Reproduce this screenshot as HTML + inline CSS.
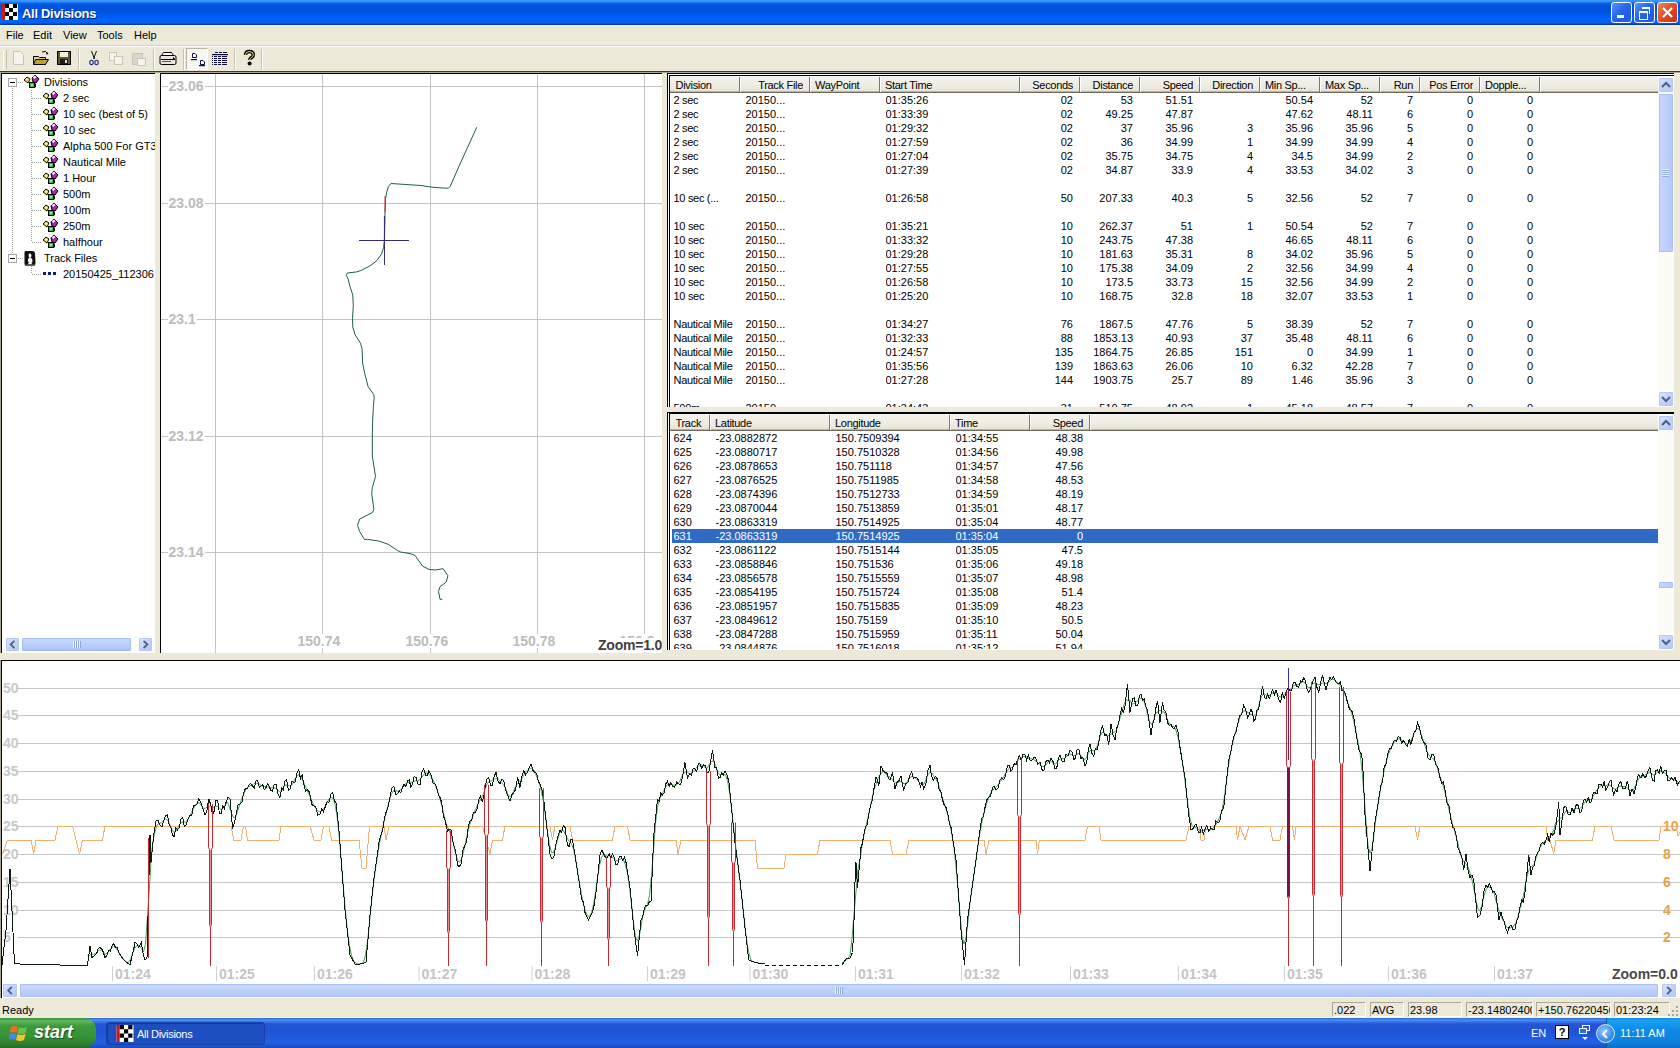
<!DOCTYPE html>
<html><head><meta charset="utf-8"><style>
html,body{margin:0;padding:0;width:1680px;height:1048px;overflow:hidden;background:#ece9d8;position:relative;}
.t11{position:absolute;font-family:"Liberation Sans",sans-serif;font-size:11px;line-height:13px;color:#000;white-space:nowrap;}
.tbtn{position:absolute;top:2px;width:21px;height:21px;border:1px solid #fff;border-radius:3px;box-sizing:border-box;background:linear-gradient(135deg,#5a94f8 0%,#2a6af0 40%,#1e5ce8 70%,#2a64e0 100%);}
</style></head><body>
<div id="title" style="position:absolute;left:0;top:0;width:1680px;height:25px;
 background:linear-gradient(to bottom,#3a9bff 0px,#3290f8 1.5px,#0a5ee2 3.5px,#0052e0 6px,#0052dc 12px,#005bf0 15px,#0064fc 20px,#0a5cf2 23px,#083c9c 24.5px,#06389a 25px);"></div>
<div style="position:absolute;left:2px;top:4px;width:16px;height:16px;">
 <svg width="16" height="16" viewBox="0 0 16 16"><rect x="0" y="0" width="16" height="16" fill="#fff"/>
 <rect x="0" y="0" width="3" height="16" fill="#d01818"/>
 <rect x="3" y="0" width="4" height="4" fill="#000"/><rect x="11" y="0" width="4" height="4" fill="#000"/>
 <rect x="7" y="4" width="4" height="4" fill="#000"/><rect x="3" y="8" width="4" height="4" fill="#000"/>
 <rect x="11" y="8" width="4" height="4" fill="#000"/><rect x="7" y="12" width="4" height="4" fill="#000"/></svg></div>
<div style="position:absolute;left:22px;top:5.5px;font:bold 13px 'Liberation Sans',sans-serif;color:#fff;letter-spacing:-0.3px;text-shadow:1px 1px 0 #0a246a;">All Divisions</div>
<div class="tbtn" style="left:1611px;"><div style="position:absolute;left:5px;top:12px;width:7px;height:3px;background:#fff;"></div></div>
<div class="tbtn" style="left:1634px;"><div style="position:absolute;left:4px;top:8px;width:7px;height:6px;border:1px solid #fff;border-top-width:2px;"></div><div style="position:absolute;left:7px;top:4px;width:7px;height:5px;border:1px solid #fff;border-top-width:2px;border-left:none;border-bottom:none;"></div></div>
<div class="tbtn" style="left:1657px;background:linear-gradient(135deg,#f08c6a 0%,#e35b32 35%,#d8401c 70%,#c33214 100%);">
 <svg width="21" height="21" viewBox="0 0 21 21" style="position:absolute;left:-1px;top:-1px"><path d="M6 6 L15 15 M15 6 L6 15" stroke="#fff" stroke-width="2"/></svg></div>
<div style="position:absolute;left:0;top:25px;width:1680px;height:46px;background:#ece9d8;"></div><div style="position:absolute;left:0;top:25px;width:1680px;height:2px;background:linear-gradient(to bottom,#e2f6ff,#ece9d8);"></div><div class="t11" style="left:6px;top:29px;">File</div><div class="t11" style="left:33px;top:29px;">Edit</div><div class="t11" style="left:63px;top:29px;">View</div><div class="t11" style="left:97px;top:29px;">Tools</div><div class="t11" style="left:134px;top:29px;">Help</div><div style="position:absolute;left:0;top:45px;width:1680px;height:1px;background:#d8d2bd;"></div><div style="position:absolute;left:0;top:46px;width:1680px;height:1px;background:#fff;"></div><div style="position:absolute;left:3px;top:50px;width:2px;height:19px;border-left:1px solid #fff;border-right:1px solid #c1bdaa;"></div><div style="position:absolute;left:78px;top:49px;width:1px;height:21px;background:#c5c2b2;"></div><div style="position:absolute;left:79px;top:49px;width:1px;height:21px;background:#fff;"></div><div style="position:absolute;left:153px;top:49px;width:1px;height:21px;background:#c5c2b2;"></div><div style="position:absolute;left:154px;top:49px;width:1px;height:21px;background:#fff;"></div><div style="position:absolute;left:183px;top:49px;width:1px;height:21px;background:#c5c2b2;"></div><div style="position:absolute;left:184px;top:49px;width:1px;height:21px;background:#fff;"></div><div style="position:absolute;left:234px;top:49px;width:1px;height:21px;background:#c5c2b2;"></div><div style="position:absolute;left:235px;top:49px;width:1px;height:21px;background:#fff;"></div><div style="position:absolute;left:261px;top:49px;width:1px;height:21px;background:#c5c2b2;"></div><div style="position:absolute;left:262px;top:49px;width:1px;height:21px;background:#fff;"></div><div style="position:absolute;left:186px;top:48px;width:22px;height:22px;background:#f7f6f1;border-left:1px solid #b9b5a4;border-top:1px solid #b9b5a4;border-right:1px solid #fff;border-bottom:1px solid #fff;box-sizing:border-box;"></div>
<svg style="position:absolute;left:0;top:47px" width="270" height="24" viewBox="0 47 270 24">
 <!-- new (disabled) -->
 <path d="M13.5 51.5 h7 l3 3 v10 h-10 z" fill="#f4f3ee" stroke="#c9c6b6"/>
 <!-- open -->
 <path d="M33.5 56.5 h5 l1 1 h6 v7 h-12 z" fill="#e8d36a" stroke="#000"/>
 <path d="M35.5 59.5 h13 l-3 5 h-12 z" fill="#b9a23c" stroke="#000"/>
 <path d="M42 52 q4 -2 6 2" fill="none" stroke="#000"/><path d="M47 52 l1.5 2 l-2.5 0.5z" fill="#000"/>
 <!-- save -->
 <rect x="57.5" y="51.5" width="13" height="13" fill="#5e5a2a" stroke="#000"/>
 <rect x="60" y="52" width="8" height="5" fill="#f2efe0"/>
 <rect x="60" y="59" width="8" height="5" fill="#1e1e1e"/><rect x="65" y="60" width="2" height="3" fill="#ddd"/>
 <!-- cut -->
 <path d="M91.5 51 l3 8 M96.5 51 l-3 8" stroke="#111" stroke-width="1"/>
 <ellipse cx="91.5" cy="62.5" rx="1.7" ry="2.2" fill="none" stroke="#22228a" stroke-width="1.1"/><ellipse cx="96.5" cy="62.5" rx="1.7" ry="2.2" fill="none" stroke="#22228a" stroke-width="1.1"/>
 <!-- copy disabled -->
 <rect x="109.5" y="52.5" width="7" height="8" fill="#f4f3ee" stroke="#c9c6b6"/><rect x="114.5" y="56.5" width="8" height="8" fill="#f4f3ee" stroke="#c9c6b6"/>
 <!-- paste disabled -->
 <rect x="132.5" y="53.5" width="10" height="11" fill="#d8d6cc" stroke="#c9c6b6"/><rect x="137.5" y="58.5" width="8" height="7" fill="#f4f3ee" stroke="#c9c6b6"/>
 <!-- print -->
 <path d="M163.5 52.5 h8 l2 3 h-12 z" fill="#fff" stroke="#000"/>
 <path d="M161.5 55.5 h13 q1.5 0 1.5 1.5 v6 q0 1.5 -1.5 1.5 h-13 q-1.5 0 -1.5 -1.5 v-6 q0 -1.5 1.5 -1.5z" fill="#e8e6de" stroke="#000"/>
 <rect x="161" y="59" width="14" height="1" fill="#000"/><rect x="162" y="61" width="9" height="1" fill="#555"/>
 <path d="M173 57 l2 1.5 l-2 1.5z" fill="#000"/>
 <!-- tile -->
 <path d="M192.5 53.5 h2.5 l1.5 1.5 v2.5 h-4z" fill="#fff" stroke="#101058"/><rect x="191" y="59" width="6" height="1.2" fill="#101058"/>
 <path d="M200.5 60.5 h2.5 l1.5 1.5 v2.5 h-4z" fill="#fff" stroke="#101058"/><rect x="199" y="65" width="6" height="1.2" fill="#101058"/>
 <!-- grid -->
 <g fill="#101040">
 <rect x="215" y="52" width="3" height="1"/><rect x="219" y="52" width="3" height="1"/><rect x="223" y="52" width="4" height="1"/>
 <rect x="212" y="54" width="16" height="1.2"/>
 <rect x="212" y="56" width="1" height="1"/><rect x="214" y="56" width="3" height="1"/><rect x="218" y="56" width="3" height="1"/><rect x="222" y="56" width="5" height="1"/>
 <rect x="212" y="58" width="1" height="1"/><rect x="214" y="58" width="3" height="1"/><rect x="218" y="58" width="3" height="1"/><rect x="222" y="58" width="5" height="1"/>
 <rect x="212" y="60" width="1" height="1"/><rect x="214" y="60" width="3" height="1"/><rect x="218" y="60" width="3" height="1"/><rect x="222" y="60" width="5" height="1"/>
 <rect x="212" y="62" width="1" height="1"/><rect x="214" y="62" width="3" height="1"/><rect x="218" y="62" width="3" height="1"/><rect x="222" y="62" width="5" height="1"/>
 <rect x="212" y="64" width="1" height="1"/><rect x="214" y="64" width="3" height="1"/><rect x="218" y="64" width="3" height="1"/><rect x="222" y="64" width="5" height="1"/>
 </g>
 <!-- help -->
 <path d="M245.5 55 q0 -3.5 3.8 -3.5 q4 0 4 3.3 q0 2 -2.2 3 q-1.3 0.7 -1.3 2.2" fill="none" stroke="#000" stroke-width="3.4"/>
 <path d="M245.5 55 q0 -3.5 3.8 -3.5 q4 0 4 3.3 q0 2 -2.2 3 q-1.3 0.7 -1.3 2.2" fill="none" stroke="#f4e68a" stroke-width="1"/>
 <circle cx="249.6" cy="63.4" r="2" fill="#000"/>
</svg><div style="position:absolute;left:0;top:71px;width:1680px;height:1px;background:#3a3a3a;"></div><div style="position:absolute;left:0;top:72px;width:1680px;height:1px;background:#aca899;"></div><div style="position:absolute;left:0;top:73px;width:155px;height:580px;background:#fff;border-top:1px solid #000;border-left:2px solid #000;box-sizing:border-box;"></div><div style="position:absolute;left:0;top:73px;width:1px;height:580px;background:#aca899;"></div><div style="position:absolute;left:12px;top:88px;width:1px;height:170px;background-image:repeating-linear-gradient(to bottom,#a0a0a0 0 1px,transparent 1px 2px);"></div><div style="position:absolute;left:18px;top:82px;width:5px;height:1px;background-image:repeating-linear-gradient(to right,#a0a0a0 0 1px,transparent 1px 2px);"></div><div style="position:absolute;left:18px;top:258px;width:5px;height:1px;background-image:repeating-linear-gradient(to right,#a0a0a0 0 1px,transparent 1px 2px);"></div><div style="position:absolute;left:31px;top:90px;width:1px;height:152px;background-image:repeating-linear-gradient(to bottom,#a0a0a0 0 1px,transparent 1px 2px);"></div><div style="position:absolute;left:31px;top:264px;width:1px;height:10px;background-image:repeating-linear-gradient(to bottom,#a0a0a0 0 1px,transparent 1px 2px);"></div><div style="position:absolute;left:8px;top:78px;width:9px;height:9px;border:1px solid #a5a5a5;box-sizing:border-box;background:#fff;"><div style="position:absolute;left:1px;top:3px;width:5px;height:1px;background:#000;"></div></div><div style="position:absolute;left:8px;top:254px;width:9px;height:9px;border:1px solid #a5a5a5;box-sizing:border-box;background:#fff;"><div style="position:absolute;left:1px;top:3px;width:5px;height:1px;background:#000;"></div></div><svg style="position:absolute;left:23px;top:75px" width="17" height="14" viewBox="0 0 17 14">
<path d="M1 5 L4 2 L7 4 L5 8 Z" fill="#f2e27a" stroke="#000" stroke-width="1"/>
<path d="M9 3 L12 0 L16 4 L13 8 L10 7 Z" fill="#a02aa8" stroke="#000" stroke-width="1"/>
<path d="M10 2 L12 0.5 L13.5 2 L11 4z" fill="#fff"/>
<rect x="6.5" y="7.5" width="5" height="5" fill="#3cb44a" stroke="#000"/>
<rect x="8" y="9" width="2" height="2" fill="#9be49b"/>
<path d="M11 8 l2 1 v3 l-2 1z" fill="#000"/>
</svg><div class="t11" style="left:44px;top:76px;">Divisions</div><div style="position:absolute;left:32px;top:98px;width:10px;height:1px;background-image:repeating-linear-gradient(to right,#a0a0a0 0 1px,transparent 1px 2px);"></div><svg style="position:absolute;left:42px;top:91px" width="17" height="14" viewBox="0 0 17 14">
<path d="M1 5 L4 2 L7 4 L5 8 Z" fill="#f2e27a" stroke="#000" stroke-width="1"/>
<path d="M9 3 L12 0 L16 4 L13 8 L10 7 Z" fill="#a02aa8" stroke="#000" stroke-width="1"/>
<path d="M10 2 L12 0.5 L13.5 2 L11 4z" fill="#fff"/>
<rect x="6.5" y="7.5" width="5" height="5" fill="#3cb44a" stroke="#000"/>
<rect x="8" y="9" width="2" height="2" fill="#9be49b"/>
<path d="M11 8 l2 1 v3 l-2 1z" fill="#000"/>
</svg><div class="t11" style="left:63px;top:92px;width:92px;overflow:hidden;">2 sec</div><div style="position:absolute;left:32px;top:114px;width:10px;height:1px;background-image:repeating-linear-gradient(to right,#a0a0a0 0 1px,transparent 1px 2px);"></div><svg style="position:absolute;left:42px;top:107px" width="17" height="14" viewBox="0 0 17 14">
<path d="M1 5 L4 2 L7 4 L5 8 Z" fill="#f2e27a" stroke="#000" stroke-width="1"/>
<path d="M9 3 L12 0 L16 4 L13 8 L10 7 Z" fill="#a02aa8" stroke="#000" stroke-width="1"/>
<path d="M10 2 L12 0.5 L13.5 2 L11 4z" fill="#fff"/>
<rect x="6.5" y="7.5" width="5" height="5" fill="#3cb44a" stroke="#000"/>
<rect x="8" y="9" width="2" height="2" fill="#9be49b"/>
<path d="M11 8 l2 1 v3 l-2 1z" fill="#000"/>
</svg><div class="t11" style="left:63px;top:108px;width:92px;overflow:hidden;">10 sec (best of 5)</div><div style="position:absolute;left:32px;top:130px;width:10px;height:1px;background-image:repeating-linear-gradient(to right,#a0a0a0 0 1px,transparent 1px 2px);"></div><svg style="position:absolute;left:42px;top:123px" width="17" height="14" viewBox="0 0 17 14">
<path d="M1 5 L4 2 L7 4 L5 8 Z" fill="#f2e27a" stroke="#000" stroke-width="1"/>
<path d="M9 3 L12 0 L16 4 L13 8 L10 7 Z" fill="#a02aa8" stroke="#000" stroke-width="1"/>
<path d="M10 2 L12 0.5 L13.5 2 L11 4z" fill="#fff"/>
<rect x="6.5" y="7.5" width="5" height="5" fill="#3cb44a" stroke="#000"/>
<rect x="8" y="9" width="2" height="2" fill="#9be49b"/>
<path d="M11 8 l2 1 v3 l-2 1z" fill="#000"/>
</svg><div class="t11" style="left:63px;top:124px;width:92px;overflow:hidden;">10 sec</div><div style="position:absolute;left:32px;top:146px;width:10px;height:1px;background-image:repeating-linear-gradient(to right,#a0a0a0 0 1px,transparent 1px 2px);"></div><svg style="position:absolute;left:42px;top:139px" width="17" height="14" viewBox="0 0 17 14">
<path d="M1 5 L4 2 L7 4 L5 8 Z" fill="#f2e27a" stroke="#000" stroke-width="1"/>
<path d="M9 3 L12 0 L16 4 L13 8 L10 7 Z" fill="#a02aa8" stroke="#000" stroke-width="1"/>
<path d="M10 2 L12 0.5 L13.5 2 L11 4z" fill="#fff"/>
<rect x="6.5" y="7.5" width="5" height="5" fill="#3cb44a" stroke="#000"/>
<rect x="8" y="9" width="2" height="2" fill="#9be49b"/>
<path d="M11 8 l2 1 v3 l-2 1z" fill="#000"/>
</svg><div class="t11" style="left:63px;top:140px;width:92px;overflow:hidden;">Alpha 500 For GT3:</div><div style="position:absolute;left:32px;top:162px;width:10px;height:1px;background-image:repeating-linear-gradient(to right,#a0a0a0 0 1px,transparent 1px 2px);"></div><svg style="position:absolute;left:42px;top:155px" width="17" height="14" viewBox="0 0 17 14">
<path d="M1 5 L4 2 L7 4 L5 8 Z" fill="#f2e27a" stroke="#000" stroke-width="1"/>
<path d="M9 3 L12 0 L16 4 L13 8 L10 7 Z" fill="#a02aa8" stroke="#000" stroke-width="1"/>
<path d="M10 2 L12 0.5 L13.5 2 L11 4z" fill="#fff"/>
<rect x="6.5" y="7.5" width="5" height="5" fill="#3cb44a" stroke="#000"/>
<rect x="8" y="9" width="2" height="2" fill="#9be49b"/>
<path d="M11 8 l2 1 v3 l-2 1z" fill="#000"/>
</svg><div class="t11" style="left:63px;top:156px;width:92px;overflow:hidden;">Nautical Mile</div><div style="position:absolute;left:32px;top:178px;width:10px;height:1px;background-image:repeating-linear-gradient(to right,#a0a0a0 0 1px,transparent 1px 2px);"></div><svg style="position:absolute;left:42px;top:171px" width="17" height="14" viewBox="0 0 17 14">
<path d="M1 5 L4 2 L7 4 L5 8 Z" fill="#f2e27a" stroke="#000" stroke-width="1"/>
<path d="M9 3 L12 0 L16 4 L13 8 L10 7 Z" fill="#a02aa8" stroke="#000" stroke-width="1"/>
<path d="M10 2 L12 0.5 L13.5 2 L11 4z" fill="#fff"/>
<rect x="6.5" y="7.5" width="5" height="5" fill="#3cb44a" stroke="#000"/>
<rect x="8" y="9" width="2" height="2" fill="#9be49b"/>
<path d="M11 8 l2 1 v3 l-2 1z" fill="#000"/>
</svg><div class="t11" style="left:63px;top:172px;width:92px;overflow:hidden;">1 Hour</div><div style="position:absolute;left:32px;top:194px;width:10px;height:1px;background-image:repeating-linear-gradient(to right,#a0a0a0 0 1px,transparent 1px 2px);"></div><svg style="position:absolute;left:42px;top:187px" width="17" height="14" viewBox="0 0 17 14">
<path d="M1 5 L4 2 L7 4 L5 8 Z" fill="#f2e27a" stroke="#000" stroke-width="1"/>
<path d="M9 3 L12 0 L16 4 L13 8 L10 7 Z" fill="#a02aa8" stroke="#000" stroke-width="1"/>
<path d="M10 2 L12 0.5 L13.5 2 L11 4z" fill="#fff"/>
<rect x="6.5" y="7.5" width="5" height="5" fill="#3cb44a" stroke="#000"/>
<rect x="8" y="9" width="2" height="2" fill="#9be49b"/>
<path d="M11 8 l2 1 v3 l-2 1z" fill="#000"/>
</svg><div class="t11" style="left:63px;top:188px;width:92px;overflow:hidden;">500m</div><div style="position:absolute;left:32px;top:210px;width:10px;height:1px;background-image:repeating-linear-gradient(to right,#a0a0a0 0 1px,transparent 1px 2px);"></div><svg style="position:absolute;left:42px;top:203px" width="17" height="14" viewBox="0 0 17 14">
<path d="M1 5 L4 2 L7 4 L5 8 Z" fill="#f2e27a" stroke="#000" stroke-width="1"/>
<path d="M9 3 L12 0 L16 4 L13 8 L10 7 Z" fill="#a02aa8" stroke="#000" stroke-width="1"/>
<path d="M10 2 L12 0.5 L13.5 2 L11 4z" fill="#fff"/>
<rect x="6.5" y="7.5" width="5" height="5" fill="#3cb44a" stroke="#000"/>
<rect x="8" y="9" width="2" height="2" fill="#9be49b"/>
<path d="M11 8 l2 1 v3 l-2 1z" fill="#000"/>
</svg><div class="t11" style="left:63px;top:204px;width:92px;overflow:hidden;">100m</div><div style="position:absolute;left:32px;top:226px;width:10px;height:1px;background-image:repeating-linear-gradient(to right,#a0a0a0 0 1px,transparent 1px 2px);"></div><svg style="position:absolute;left:42px;top:219px" width="17" height="14" viewBox="0 0 17 14">
<path d="M1 5 L4 2 L7 4 L5 8 Z" fill="#f2e27a" stroke="#000" stroke-width="1"/>
<path d="M9 3 L12 0 L16 4 L13 8 L10 7 Z" fill="#a02aa8" stroke="#000" stroke-width="1"/>
<path d="M10 2 L12 0.5 L13.5 2 L11 4z" fill="#fff"/>
<rect x="6.5" y="7.5" width="5" height="5" fill="#3cb44a" stroke="#000"/>
<rect x="8" y="9" width="2" height="2" fill="#9be49b"/>
<path d="M11 8 l2 1 v3 l-2 1z" fill="#000"/>
</svg><div class="t11" style="left:63px;top:220px;width:92px;overflow:hidden;">250m</div><div style="position:absolute;left:32px;top:242px;width:10px;height:1px;background-image:repeating-linear-gradient(to right,#a0a0a0 0 1px,transparent 1px 2px);"></div><svg style="position:absolute;left:42px;top:235px" width="17" height="14" viewBox="0 0 17 14">
<path d="M1 5 L4 2 L7 4 L5 8 Z" fill="#f2e27a" stroke="#000" stroke-width="1"/>
<path d="M9 3 L12 0 L16 4 L13 8 L10 7 Z" fill="#a02aa8" stroke="#000" stroke-width="1"/>
<path d="M10 2 L12 0.5 L13.5 2 L11 4z" fill="#fff"/>
<rect x="6.5" y="7.5" width="5" height="5" fill="#3cb44a" stroke="#000"/>
<rect x="8" y="9" width="2" height="2" fill="#9be49b"/>
<path d="M11 8 l2 1 v3 l-2 1z" fill="#000"/>
</svg><div class="t11" style="left:63px;top:236px;width:92px;overflow:hidden;">halfhour</div><svg style="position:absolute;left:24px;top:251px" width="12" height="15" viewBox="0 0 12 15">
<path d="M0.5 1 q0 -1 2 -1 h6 q2 0 2.5 2 l0.5 10 q0 2 -1.5 2.5 h-8 q-1.5 0 -1.5 -1.5z" fill="#111"/>
<path d="M5 2.5 q2.5 -0.5 2.5 2 q0 1.5 -1 2 q2 1 2 3 q0 2 -1 2.5 l1 1.5 h-5 l1.5 -2 q-1.5 -1 -1 -3 q0.5 -1.5 1.5 -2 q-1.5 -1 -0.5 -4z" fill="#f4f4f4"/>
<path d="M1 13 h10 v2 h-10z" fill="#2a5a2a" opacity="0.6"/></svg><div class="t11" style="left:44px;top:252px;">Track Files</div><div style="position:absolute;left:32px;top:274px;width:10px;height:1px;background-image:repeating-linear-gradient(to right,#a0a0a0 0 1px,transparent 1px 2px);"></div><div style="position:absolute;left:43px;top:272px;width:13px;height:3px;background-image:repeating-linear-gradient(to right,#101880 0 3px,transparent 3px 5px);"></div><div class="t11" style="left:63px;top:268px;">20150425_112306</div><div style="position:absolute;left:3px;top:636px;width:151px;height:16px;background:#fbfbf8;"></div><div style="position:absolute;left:5px;top:637px;width:15px;height:15px;border-radius:2px;background:linear-gradient(135deg,#dce6fc,#c2d3fc 50%,#b0c6f8);border:1px solid #fff;box-sizing:border-box;box-shadow:inset 0 0 0 1px #b6c8f0;">
<svg width="13" height="13" style="position:absolute;left:0;top:0" viewBox="0 0 14 14"><path d="M9 3 L5 7 L9 11" fill="none" stroke="#4d6185" stroke-width="2"/></svg></div><div style="position:absolute;left:138px;top:637px;width:15px;height:15px;border-radius:2px;background:linear-gradient(135deg,#dce6fc,#c2d3fc 50%,#b0c6f8);border:1px solid #fff;box-sizing:border-box;box-shadow:inset 0 0 0 1px #b6c8f0;">
<svg width="13" height="13" style="position:absolute;left:0;top:0" viewBox="0 0 14 14"><path d="M5 3 L9 7 L5 11" fill="none" stroke="#4d6185" stroke-width="2"/></svg></div><div style="position:absolute;left:21px;top:637px;width:111px;height:15px;border-radius:2px;background:linear-gradient(to bottom,#c8d8fc,#b8cdfb 60%,#a8c0f8);border:1px solid #fff;box-sizing:border-box;box-shadow:inset 0 0 0 1px #a9bef2;"></div><div style="position:absolute;left:73px;top:641px;width:8px;height:7px;background-image:repeating-linear-gradient(to right,#eef3ff 0 1px,#8ea8e0 1px 2px);"></div><div style="position:absolute;left:160px;top:73px;width:502px;height:580px;background:#fff;border-left:1px solid #000;border-top:1px solid #000;box-sizing:border-box;overflow:hidden;"><svg width="502" height="580" style="position:absolute;left:-1px;top:-1px" viewBox="160 73 502 580"><line x1="215.5" y1="73" x2="215.5" y2="653" stroke="#c4c4c4" stroke-width="1"/><line x1="322.5" y1="73" x2="322.5" y2="653" stroke="#c4c4c4" stroke-width="1"/><line x1="430.5" y1="73" x2="430.5" y2="653" stroke="#c4c4c4" stroke-width="1"/><line x1="537.5" y1="73" x2="537.5" y2="653" stroke="#c4c4c4" stroke-width="1"/><line x1="644.5" y1="73" x2="644.5" y2="653" stroke="#c4c4c4" stroke-width="1"/><line x1="160" y1="86.5" x2="662" y2="86.5" stroke="#c4c4c4" stroke-width="1"/><line x1="160" y1="203.5" x2="662" y2="203.5" stroke="#c4c4c4" stroke-width="1"/><line x1="160" y1="319.5" x2="662" y2="319.5" stroke="#c4c4c4" stroke-width="1"/><line x1="160" y1="436.5" x2="662" y2="436.5" stroke="#c4c4c4" stroke-width="1"/><line x1="160" y1="552.5" x2="662" y2="552.5" stroke="#c4c4c4" stroke-width="1"/><polyline points="476.8,127.2 467.4,147.8 458.8,166.7 450.2,186.4 448.5,188.1 443.3,188.1 433,187.3 421,185.5 409,184.7 395.2,183.8 391,183.5 388.4,186.4 386.7,192.4 385.5,199.3 385,213 384.6,230.2 384.3,240.5 383.6,247.4 381.5,254.2 376.4,261.1 369.5,266.2 360.9,270.5 356.6,271.9 347.5,273 346.3,275.3 348.2,279.1 349.8,286 352.8,295.1 353.3,305.8 352.5,318.8 352.8,327.2 355.1,334.8 360.5,343.2 362,348.5 362.7,363.8 365,374.5 368.1,386.7 373.7,394.4 374.2,397.4 373.4,406.6 372.7,420 372.3,434 372.3,456 375.5,476.5 372.3,487.5 371.7,493.8 373.9,509.5 372.3,512.7 366,515.8 359.7,519 357.5,525.3 359.7,531.6 364.4,539.4 367.6,539.4 378.6,541 388.1,544.2 397.5,550.5 400.7,552 410.1,553.6 414.8,555.2 422.7,566.2 429,569.4 435.3,570 443.2,568.7 447.9,575.7 446.3,582 440,586.7 438.5,591.4 440,599.3 442.2,599.3" fill="none" stroke="#1d5e48" stroke-width="1"/><line x1="385" y1="196" x2="385" y2="212" stroke="#c03030" stroke-width="1"/><line x1="384.5" y1="216" x2="384.5" y2="238" stroke="#802080" stroke-width="1.2"/><line x1="359" y1="240.5" x2="409" y2="240.5" stroke="#3a2a7a" stroke-width="1"/><line x1="384.5" y1="216" x2="384.5" y2="265" stroke="#3a2a7a" stroke-width="1"/></svg><div style="position:absolute;font:bold 14px 'Liberation Sans',sans-serif;color:#bcbcbc;background:#fff;line-height:14px;left:6.5px;top:5px;padding:0 1px;">23.06</div><div style="position:absolute;font:bold 14px 'Liberation Sans',sans-serif;color:#bcbcbc;background:#fff;line-height:14px;left:6.5px;top:122px;padding:0 1px;">23.08</div><div style="position:absolute;font:bold 14px 'Liberation Sans',sans-serif;color:#bcbcbc;background:#fff;line-height:14px;left:6.5px;top:238px;padding:0 1px;">23.1</div><div style="position:absolute;font:bold 14px 'Liberation Sans',sans-serif;color:#bcbcbc;background:#fff;line-height:14px;left:6.5px;top:355px;padding:0 1px;">23.12</div><div style="position:absolute;font:bold 14px 'Liberation Sans',sans-serif;color:#bcbcbc;background:#fff;line-height:14px;left:6.5px;top:471px;padding:0 1px;">23.14</div><div style="position:absolute;font:bold 14px 'Liberation Sans',sans-serif;color:#bcbcbc;background:#fff;line-height:14px;left:135.5px;top:559.5px;padding:0 1px;">150.74</div><div style="position:absolute;font:bold 14px 'Liberation Sans',sans-serif;color:#bcbcbc;background:#fff;line-height:14px;left:243.5px;top:559.5px;padding:0 1px;">150.76</div><div style="position:absolute;font:bold 14px 'Liberation Sans',sans-serif;color:#bcbcbc;background:#fff;line-height:14px;left:350.5px;top:559.5px;padding:0 1px;">150.78</div><div style="position:absolute;font:bold 14px 'Liberation Sans',sans-serif;color:#bcbcbc;background:#fff;line-height:14px;left:457.5px;top:559.5px;padding:0 1px;">150.8</div><div style="position:absolute;font:bold 14px 'Liberation Sans',sans-serif;color:#bcbcbc;background:#fff;line-height:14px;color:#404040;left:436px;top:564px;padding:0 0 0 1px;letter-spacing:-0.2px;">Zoom=1.0</div></div><div style="position:absolute;left:667px;top:73px;width:1007px;height:334px;background:#fff;border-left:1px solid #000;border-top:1px solid #000;box-sizing:border-box;"></div><div style="position:absolute;left:669px;top:75px;width:1px;height:332px;background:#000;"></div><div style="position:absolute;left:669px;top:75px;width:1005px;height:1px;background:#000;"></div><div style="position:absolute;left:670px;top:76px;width:988px;height:17px;background:linear-gradient(to bottom,#f4f3ec 0,#eeece2 60%,#e4e1d2 100%);box-sizing:border-box;"></div><div style="position:absolute;left:670px;top:91px;width:988px;height:1px;background:#b8b5a6;"></div><div style="position:absolute;left:670px;top:92px;width:988px;height:1px;background:#6e6b5e;"></div><div style="position:absolute;left:739px;top:77px;width:1px;height:15px;background:#7c7a6c;"></div><div style="position:absolute;left:740px;top:77px;width:1px;height:15px;background:#fff;"></div><div class="t11" style="left:675.5px;top:79px;width:65px;overflow:hidden;letter-spacing:-0.3px;">Division</div><div style="position:absolute;left:809px;top:77px;width:1px;height:15px;background:#7c7a6c;"></div><div style="position:absolute;left:810px;top:77px;width:1px;height:15px;background:#fff;"></div><div class="t11" style="left:739px;top:79px;width:64px;text-align:right;overflow:hidden;letter-spacing:-0.3px;">Track File</div><div style="position:absolute;left:879px;top:77px;width:1px;height:15px;background:#7c7a6c;"></div><div style="position:absolute;left:880px;top:77px;width:1px;height:15px;background:#fff;"></div><div class="t11" style="left:815px;top:79px;width:64px;overflow:hidden;letter-spacing:-0.3px;">WayPoint</div><div style="position:absolute;left:1019px;top:77px;width:1px;height:15px;background:#7c7a6c;"></div><div style="position:absolute;left:1020px;top:77px;width:1px;height:15px;background:#fff;"></div><div class="t11" style="left:885px;top:79px;width:134px;overflow:hidden;letter-spacing:-0.3px;">Start Time</div><div style="position:absolute;left:1079px;top:77px;width:1px;height:15px;background:#7c7a6c;"></div><div style="position:absolute;left:1080px;top:77px;width:1px;height:15px;background:#fff;"></div><div class="t11" style="left:1019px;top:79px;width:54px;text-align:right;overflow:hidden;letter-spacing:-0.3px;">Seconds</div><div style="position:absolute;left:1139px;top:77px;width:1px;height:15px;background:#7c7a6c;"></div><div style="position:absolute;left:1140px;top:77px;width:1px;height:15px;background:#fff;"></div><div class="t11" style="left:1079px;top:79px;width:54px;text-align:right;overflow:hidden;letter-spacing:-0.3px;">Distance</div><div style="position:absolute;left:1199px;top:77px;width:1px;height:15px;background:#7c7a6c;"></div><div style="position:absolute;left:1200px;top:77px;width:1px;height:15px;background:#fff;"></div><div class="t11" style="left:1139px;top:79px;width:54px;text-align:right;overflow:hidden;letter-spacing:-0.3px;">Speed</div><div style="position:absolute;left:1259px;top:77px;width:1px;height:15px;background:#7c7a6c;"></div><div style="position:absolute;left:1260px;top:77px;width:1px;height:15px;background:#fff;"></div><div class="t11" style="left:1199px;top:79px;width:54px;text-align:right;overflow:hidden;letter-spacing:-0.3px;">Direction</div><div style="position:absolute;left:1319px;top:77px;width:1px;height:15px;background:#7c7a6c;"></div><div style="position:absolute;left:1320px;top:77px;width:1px;height:15px;background:#fff;"></div><div class="t11" style="left:1265px;top:79px;width:54px;overflow:hidden;letter-spacing:-0.3px;">Min Sp...</div><div style="position:absolute;left:1379px;top:77px;width:1px;height:15px;background:#7c7a6c;"></div><div style="position:absolute;left:1380px;top:77px;width:1px;height:15px;background:#fff;"></div><div class="t11" style="left:1325px;top:79px;width:54px;overflow:hidden;letter-spacing:-0.3px;">Max Sp...</div><div style="position:absolute;left:1419px;top:77px;width:1px;height:15px;background:#7c7a6c;"></div><div style="position:absolute;left:1420px;top:77px;width:1px;height:15px;background:#fff;"></div><div class="t11" style="left:1379px;top:79px;width:34px;text-align:right;overflow:hidden;letter-spacing:-0.3px;">Run</div><div style="position:absolute;left:1479px;top:77px;width:1px;height:15px;background:#7c7a6c;"></div><div style="position:absolute;left:1480px;top:77px;width:1px;height:15px;background:#fff;"></div><div class="t11" style="left:1419px;top:79px;width:54px;text-align:right;overflow:hidden;letter-spacing:-0.3px;">Pos Error</div><div style="position:absolute;left:1539px;top:77px;width:1px;height:15px;background:#7c7a6c;"></div><div style="position:absolute;left:1540px;top:77px;width:1px;height:15px;background:#fff;"></div><div class="t11" style="left:1485px;top:79px;width:54px;overflow:hidden;letter-spacing:-0.3px;">Dopple...</div><div style="position:absolute;left:670px;top:93px;width:988px;height:314px;overflow:hidden;"><div class="t11" style="left:3.5px;top:1px;width:65px;overflow:hidden;letter-spacing:-0.3px;">2 sec</div><div class="t11" style="left:75.5px;top:1px;width:64px;overflow:hidden;">20150...</div><div class="t11" style="left:215.5px;top:1px;width:134px;overflow:hidden;">01:35:26</div><div class="t11" style="left:349px;top:1px;width:54px;text-align:right;">02</div><div class="t11" style="left:409px;top:1px;width:54px;text-align:right;">53</div><div class="t11" style="left:469px;top:1px;width:54px;text-align:right;">51.51</div><div class="t11" style="left:589px;top:1px;width:54px;text-align:right;">50.54</div><div class="t11" style="left:649px;top:1px;width:54px;text-align:right;">52</div><div class="t11" style="left:709px;top:1px;width:34px;text-align:right;">7</div><div class="t11" style="left:749px;top:1px;width:54px;text-align:right;">0</div><div class="t11" style="left:809px;top:1px;width:54px;text-align:right;">0</div><div class="t11" style="left:3.5px;top:15px;width:65px;overflow:hidden;letter-spacing:-0.3px;">2 sec</div><div class="t11" style="left:75.5px;top:15px;width:64px;overflow:hidden;">20150...</div><div class="t11" style="left:215.5px;top:15px;width:134px;overflow:hidden;">01:33:39</div><div class="t11" style="left:349px;top:15px;width:54px;text-align:right;">02</div><div class="t11" style="left:409px;top:15px;width:54px;text-align:right;">49.25</div><div class="t11" style="left:469px;top:15px;width:54px;text-align:right;">47.87</div><div class="t11" style="left:589px;top:15px;width:54px;text-align:right;">47.62</div><div class="t11" style="left:649px;top:15px;width:54px;text-align:right;">48.11</div><div class="t11" style="left:709px;top:15px;width:34px;text-align:right;">6</div><div class="t11" style="left:749px;top:15px;width:54px;text-align:right;">0</div><div class="t11" style="left:809px;top:15px;width:54px;text-align:right;">0</div><div class="t11" style="left:3.5px;top:29px;width:65px;overflow:hidden;letter-spacing:-0.3px;">2 sec</div><div class="t11" style="left:75.5px;top:29px;width:64px;overflow:hidden;">20150...</div><div class="t11" style="left:215.5px;top:29px;width:134px;overflow:hidden;">01:29:32</div><div class="t11" style="left:349px;top:29px;width:54px;text-align:right;">02</div><div class="t11" style="left:409px;top:29px;width:54px;text-align:right;">37</div><div class="t11" style="left:469px;top:29px;width:54px;text-align:right;">35.96</div><div class="t11" style="left:529px;top:29px;width:54px;text-align:right;">3</div><div class="t11" style="left:589px;top:29px;width:54px;text-align:right;">35.96</div><div class="t11" style="left:649px;top:29px;width:54px;text-align:right;">35.96</div><div class="t11" style="left:709px;top:29px;width:34px;text-align:right;">5</div><div class="t11" style="left:749px;top:29px;width:54px;text-align:right;">0</div><div class="t11" style="left:809px;top:29px;width:54px;text-align:right;">0</div><div class="t11" style="left:3.5px;top:43px;width:65px;overflow:hidden;letter-spacing:-0.3px;">2 sec</div><div class="t11" style="left:75.5px;top:43px;width:64px;overflow:hidden;">20150...</div><div class="t11" style="left:215.5px;top:43px;width:134px;overflow:hidden;">01:27:59</div><div class="t11" style="left:349px;top:43px;width:54px;text-align:right;">02</div><div class="t11" style="left:409px;top:43px;width:54px;text-align:right;">36</div><div class="t11" style="left:469px;top:43px;width:54px;text-align:right;">34.99</div><div class="t11" style="left:529px;top:43px;width:54px;text-align:right;">1</div><div class="t11" style="left:589px;top:43px;width:54px;text-align:right;">34.99</div><div class="t11" style="left:649px;top:43px;width:54px;text-align:right;">34.99</div><div class="t11" style="left:709px;top:43px;width:34px;text-align:right;">4</div><div class="t11" style="left:749px;top:43px;width:54px;text-align:right;">0</div><div class="t11" style="left:809px;top:43px;width:54px;text-align:right;">0</div><div class="t11" style="left:3.5px;top:57px;width:65px;overflow:hidden;letter-spacing:-0.3px;">2 sec</div><div class="t11" style="left:75.5px;top:57px;width:64px;overflow:hidden;">20150...</div><div class="t11" style="left:215.5px;top:57px;width:134px;overflow:hidden;">01:27:04</div><div class="t11" style="left:349px;top:57px;width:54px;text-align:right;">02</div><div class="t11" style="left:409px;top:57px;width:54px;text-align:right;">35.75</div><div class="t11" style="left:469px;top:57px;width:54px;text-align:right;">34.75</div><div class="t11" style="left:529px;top:57px;width:54px;text-align:right;">4</div><div class="t11" style="left:589px;top:57px;width:54px;text-align:right;">34.5</div><div class="t11" style="left:649px;top:57px;width:54px;text-align:right;">34.99</div><div class="t11" style="left:709px;top:57px;width:34px;text-align:right;">2</div><div class="t11" style="left:749px;top:57px;width:54px;text-align:right;">0</div><div class="t11" style="left:809px;top:57px;width:54px;text-align:right;">0</div><div class="t11" style="left:3.5px;top:71px;width:65px;overflow:hidden;letter-spacing:-0.3px;">2 sec</div><div class="t11" style="left:75.5px;top:71px;width:64px;overflow:hidden;">20150...</div><div class="t11" style="left:215.5px;top:71px;width:134px;overflow:hidden;">01:27:39</div><div class="t11" style="left:349px;top:71px;width:54px;text-align:right;">02</div><div class="t11" style="left:409px;top:71px;width:54px;text-align:right;">34.87</div><div class="t11" style="left:469px;top:71px;width:54px;text-align:right;">33.9</div><div class="t11" style="left:529px;top:71px;width:54px;text-align:right;">4</div><div class="t11" style="left:589px;top:71px;width:54px;text-align:right;">33.53</div><div class="t11" style="left:649px;top:71px;width:54px;text-align:right;">34.02</div><div class="t11" style="left:709px;top:71px;width:34px;text-align:right;">3</div><div class="t11" style="left:749px;top:71px;width:54px;text-align:right;">0</div><div class="t11" style="left:809px;top:71px;width:54px;text-align:right;">0</div><div class="t11" style="left:3.5px;top:99px;width:65px;overflow:hidden;letter-spacing:-0.3px;">10 sec (...</div><div class="t11" style="left:75.5px;top:99px;width:64px;overflow:hidden;">20150...</div><div class="t11" style="left:215.5px;top:99px;width:134px;overflow:hidden;">01:26:58</div><div class="t11" style="left:349px;top:99px;width:54px;text-align:right;">50</div><div class="t11" style="left:409px;top:99px;width:54px;text-align:right;">207.33</div><div class="t11" style="left:469px;top:99px;width:54px;text-align:right;">40.3</div><div class="t11" style="left:529px;top:99px;width:54px;text-align:right;">5</div><div class="t11" style="left:589px;top:99px;width:54px;text-align:right;">32.56</div><div class="t11" style="left:649px;top:99px;width:54px;text-align:right;">52</div><div class="t11" style="left:709px;top:99px;width:34px;text-align:right;">7</div><div class="t11" style="left:749px;top:99px;width:54px;text-align:right;">0</div><div class="t11" style="left:809px;top:99px;width:54px;text-align:right;">0</div><div class="t11" style="left:3.5px;top:127px;width:65px;overflow:hidden;letter-spacing:-0.3px;">10 sec</div><div class="t11" style="left:75.5px;top:127px;width:64px;overflow:hidden;">20150...</div><div class="t11" style="left:215.5px;top:127px;width:134px;overflow:hidden;">01:35:21</div><div class="t11" style="left:349px;top:127px;width:54px;text-align:right;">10</div><div class="t11" style="left:409px;top:127px;width:54px;text-align:right;">262.37</div><div class="t11" style="left:469px;top:127px;width:54px;text-align:right;">51</div><div class="t11" style="left:529px;top:127px;width:54px;text-align:right;">1</div><div class="t11" style="left:589px;top:127px;width:54px;text-align:right;">50.54</div><div class="t11" style="left:649px;top:127px;width:54px;text-align:right;">52</div><div class="t11" style="left:709px;top:127px;width:34px;text-align:right;">7</div><div class="t11" style="left:749px;top:127px;width:54px;text-align:right;">0</div><div class="t11" style="left:809px;top:127px;width:54px;text-align:right;">0</div><div class="t11" style="left:3.5px;top:141px;width:65px;overflow:hidden;letter-spacing:-0.3px;">10 sec</div><div class="t11" style="left:75.5px;top:141px;width:64px;overflow:hidden;">20150...</div><div class="t11" style="left:215.5px;top:141px;width:134px;overflow:hidden;">01:33:32</div><div class="t11" style="left:349px;top:141px;width:54px;text-align:right;">10</div><div class="t11" style="left:409px;top:141px;width:54px;text-align:right;">243.75</div><div class="t11" style="left:469px;top:141px;width:54px;text-align:right;">47.38</div><div class="t11" style="left:589px;top:141px;width:54px;text-align:right;">46.65</div><div class="t11" style="left:649px;top:141px;width:54px;text-align:right;">48.11</div><div class="t11" style="left:709px;top:141px;width:34px;text-align:right;">6</div><div class="t11" style="left:749px;top:141px;width:54px;text-align:right;">0</div><div class="t11" style="left:809px;top:141px;width:54px;text-align:right;">0</div><div class="t11" style="left:3.5px;top:155px;width:65px;overflow:hidden;letter-spacing:-0.3px;">10 sec</div><div class="t11" style="left:75.5px;top:155px;width:64px;overflow:hidden;">20150...</div><div class="t11" style="left:215.5px;top:155px;width:134px;overflow:hidden;">01:29:28</div><div class="t11" style="left:349px;top:155px;width:54px;text-align:right;">10</div><div class="t11" style="left:409px;top:155px;width:54px;text-align:right;">181.63</div><div class="t11" style="left:469px;top:155px;width:54px;text-align:right;">35.31</div><div class="t11" style="left:529px;top:155px;width:54px;text-align:right;">8</div><div class="t11" style="left:589px;top:155px;width:54px;text-align:right;">34.02</div><div class="t11" style="left:649px;top:155px;width:54px;text-align:right;">35.96</div><div class="t11" style="left:709px;top:155px;width:34px;text-align:right;">5</div><div class="t11" style="left:749px;top:155px;width:54px;text-align:right;">0</div><div class="t11" style="left:809px;top:155px;width:54px;text-align:right;">0</div><div class="t11" style="left:3.5px;top:169px;width:65px;overflow:hidden;letter-spacing:-0.3px;">10 sec</div><div class="t11" style="left:75.5px;top:169px;width:64px;overflow:hidden;">20150...</div><div class="t11" style="left:215.5px;top:169px;width:134px;overflow:hidden;">01:27:55</div><div class="t11" style="left:349px;top:169px;width:54px;text-align:right;">10</div><div class="t11" style="left:409px;top:169px;width:54px;text-align:right;">175.38</div><div class="t11" style="left:469px;top:169px;width:54px;text-align:right;">34.09</div><div class="t11" style="left:529px;top:169px;width:54px;text-align:right;">2</div><div class="t11" style="left:589px;top:169px;width:54px;text-align:right;">32.56</div><div class="t11" style="left:649px;top:169px;width:54px;text-align:right;">34.99</div><div class="t11" style="left:709px;top:169px;width:34px;text-align:right;">4</div><div class="t11" style="left:749px;top:169px;width:54px;text-align:right;">0</div><div class="t11" style="left:809px;top:169px;width:54px;text-align:right;">0</div><div class="t11" style="left:3.5px;top:183px;width:65px;overflow:hidden;letter-spacing:-0.3px;">10 sec</div><div class="t11" style="left:75.5px;top:183px;width:64px;overflow:hidden;">20150...</div><div class="t11" style="left:215.5px;top:183px;width:134px;overflow:hidden;">01:26:58</div><div class="t11" style="left:349px;top:183px;width:54px;text-align:right;">10</div><div class="t11" style="left:409px;top:183px;width:54px;text-align:right;">173.5</div><div class="t11" style="left:469px;top:183px;width:54px;text-align:right;">33.73</div><div class="t11" style="left:529px;top:183px;width:54px;text-align:right;">15</div><div class="t11" style="left:589px;top:183px;width:54px;text-align:right;">32.56</div><div class="t11" style="left:649px;top:183px;width:54px;text-align:right;">34.99</div><div class="t11" style="left:709px;top:183px;width:34px;text-align:right;">2</div><div class="t11" style="left:749px;top:183px;width:54px;text-align:right;">0</div><div class="t11" style="left:809px;top:183px;width:54px;text-align:right;">0</div><div class="t11" style="left:3.5px;top:197px;width:65px;overflow:hidden;letter-spacing:-0.3px;">10 sec</div><div class="t11" style="left:75.5px;top:197px;width:64px;overflow:hidden;">20150...</div><div class="t11" style="left:215.5px;top:197px;width:134px;overflow:hidden;">01:25:20</div><div class="t11" style="left:349px;top:197px;width:54px;text-align:right;">10</div><div class="t11" style="left:409px;top:197px;width:54px;text-align:right;">168.75</div><div class="t11" style="left:469px;top:197px;width:54px;text-align:right;">32.8</div><div class="t11" style="left:529px;top:197px;width:54px;text-align:right;">18</div><div class="t11" style="left:589px;top:197px;width:54px;text-align:right;">32.07</div><div class="t11" style="left:649px;top:197px;width:54px;text-align:right;">33.53</div><div class="t11" style="left:709px;top:197px;width:34px;text-align:right;">1</div><div class="t11" style="left:749px;top:197px;width:54px;text-align:right;">0</div><div class="t11" style="left:809px;top:197px;width:54px;text-align:right;">0</div><div class="t11" style="left:3.5px;top:225px;width:65px;overflow:hidden;letter-spacing:-0.3px;">Nautical Mile</div><div class="t11" style="left:75.5px;top:225px;width:64px;overflow:hidden;">20150...</div><div class="t11" style="left:215.5px;top:225px;width:134px;overflow:hidden;">01:34:27</div><div class="t11" style="left:349px;top:225px;width:54px;text-align:right;">76</div><div class="t11" style="left:409px;top:225px;width:54px;text-align:right;">1867.5</div><div class="t11" style="left:469px;top:225px;width:54px;text-align:right;">47.76</div><div class="t11" style="left:529px;top:225px;width:54px;text-align:right;">5</div><div class="t11" style="left:589px;top:225px;width:54px;text-align:right;">38.39</div><div class="t11" style="left:649px;top:225px;width:54px;text-align:right;">52</div><div class="t11" style="left:709px;top:225px;width:34px;text-align:right;">7</div><div class="t11" style="left:749px;top:225px;width:54px;text-align:right;">0</div><div class="t11" style="left:809px;top:225px;width:54px;text-align:right;">0</div><div class="t11" style="left:3.5px;top:239px;width:65px;overflow:hidden;letter-spacing:-0.3px;">Nautical Mile</div><div class="t11" style="left:75.5px;top:239px;width:64px;overflow:hidden;">20150...</div><div class="t11" style="left:215.5px;top:239px;width:134px;overflow:hidden;">01:32:33</div><div class="t11" style="left:349px;top:239px;width:54px;text-align:right;">88</div><div class="t11" style="left:409px;top:239px;width:54px;text-align:right;">1853.13</div><div class="t11" style="left:469px;top:239px;width:54px;text-align:right;">40.93</div><div class="t11" style="left:529px;top:239px;width:54px;text-align:right;">37</div><div class="t11" style="left:589px;top:239px;width:54px;text-align:right;">35.48</div><div class="t11" style="left:649px;top:239px;width:54px;text-align:right;">48.11</div><div class="t11" style="left:709px;top:239px;width:34px;text-align:right;">6</div><div class="t11" style="left:749px;top:239px;width:54px;text-align:right;">0</div><div class="t11" style="left:809px;top:239px;width:54px;text-align:right;">0</div><div class="t11" style="left:3.5px;top:253px;width:65px;overflow:hidden;letter-spacing:-0.3px;">Nautical Mile</div><div class="t11" style="left:75.5px;top:253px;width:64px;overflow:hidden;">20150...</div><div class="t11" style="left:215.5px;top:253px;width:134px;overflow:hidden;">01:24:57</div><div class="t11" style="left:349px;top:253px;width:54px;text-align:right;">135</div><div class="t11" style="left:409px;top:253px;width:54px;text-align:right;">1864.75</div><div class="t11" style="left:469px;top:253px;width:54px;text-align:right;">26.85</div><div class="t11" style="left:529px;top:253px;width:54px;text-align:right;">151</div><div class="t11" style="left:589px;top:253px;width:54px;text-align:right;">0</div><div class="t11" style="left:649px;top:253px;width:54px;text-align:right;">34.99</div><div class="t11" style="left:709px;top:253px;width:34px;text-align:right;">1</div><div class="t11" style="left:749px;top:253px;width:54px;text-align:right;">0</div><div class="t11" style="left:809px;top:253px;width:54px;text-align:right;">0</div><div class="t11" style="left:3.5px;top:267px;width:65px;overflow:hidden;letter-spacing:-0.3px;">Nautical Mile</div><div class="t11" style="left:75.5px;top:267px;width:64px;overflow:hidden;">20150...</div><div class="t11" style="left:215.5px;top:267px;width:134px;overflow:hidden;">01:35:56</div><div class="t11" style="left:349px;top:267px;width:54px;text-align:right;">139</div><div class="t11" style="left:409px;top:267px;width:54px;text-align:right;">1863.63</div><div class="t11" style="left:469px;top:267px;width:54px;text-align:right;">26.06</div><div class="t11" style="left:529px;top:267px;width:54px;text-align:right;">10</div><div class="t11" style="left:589px;top:267px;width:54px;text-align:right;">6.32</div><div class="t11" style="left:649px;top:267px;width:54px;text-align:right;">42.28</div><div class="t11" style="left:709px;top:267px;width:34px;text-align:right;">7</div><div class="t11" style="left:749px;top:267px;width:54px;text-align:right;">0</div><div class="t11" style="left:809px;top:267px;width:54px;text-align:right;">0</div><div class="t11" style="left:3.5px;top:281px;width:65px;overflow:hidden;letter-spacing:-0.3px;">Nautical Mile</div><div class="t11" style="left:75.5px;top:281px;width:64px;overflow:hidden;">20150...</div><div class="t11" style="left:215.5px;top:281px;width:134px;overflow:hidden;">01:27:28</div><div class="t11" style="left:349px;top:281px;width:54px;text-align:right;">144</div><div class="t11" style="left:409px;top:281px;width:54px;text-align:right;">1903.75</div><div class="t11" style="left:469px;top:281px;width:54px;text-align:right;">25.7</div><div class="t11" style="left:529px;top:281px;width:54px;text-align:right;">89</div><div class="t11" style="left:589px;top:281px;width:54px;text-align:right;">1.46</div><div class="t11" style="left:649px;top:281px;width:54px;text-align:right;">35.96</div><div class="t11" style="left:709px;top:281px;width:34px;text-align:right;">3</div><div class="t11" style="left:749px;top:281px;width:54px;text-align:right;">0</div><div class="t11" style="left:809px;top:281px;width:54px;text-align:right;">0</div><div class="t11" style="left:3.5px;top:309px;width:65px;overflow:hidden;letter-spacing:-0.3px;">500m</div><div class="t11" style="left:75.5px;top:309px;width:64px;overflow:hidden;">20150...</div><div class="t11" style="left:215.5px;top:309px;width:134px;overflow:hidden;">01:34:43</div><div class="t11" style="left:349px;top:309px;width:54px;text-align:right;">31</div><div class="t11" style="left:409px;top:309px;width:54px;text-align:right;">510.75</div><div class="t11" style="left:469px;top:309px;width:54px;text-align:right;">48.92</div><div class="t11" style="left:529px;top:309px;width:54px;text-align:right;">1</div><div class="t11" style="left:589px;top:309px;width:54px;text-align:right;">45.18</div><div class="t11" style="left:649px;top:309px;width:54px;text-align:right;">48.57</div><div class="t11" style="left:709px;top:309px;width:34px;text-align:right;">7</div><div class="t11" style="left:749px;top:309px;width:54px;text-align:right;">0</div><div class="t11" style="left:809px;top:309px;width:54px;text-align:right;">0</div></div><div style="position:absolute;left:1658px;top:76px;width:16px;height:331px;background:#fbfbf8;"></div><div style="position:absolute;left:1658px;top:77px;width:16px;height:16px;border-radius:2px;background:linear-gradient(135deg,#dce6fc,#c2d3fc 50%,#b0c6f8);border:1px solid #fff;box-sizing:border-box;box-shadow:inset 0 0 0 1px #b6c8f0;">
<svg width="14" height="14" style="position:absolute;left:0;top:0" viewBox="0 0 14 14"><path d="M3 9 L7 5 L11 9" fill="none" stroke="#4d6185" stroke-width="2"/></svg></div><div style="position:absolute;left:1658px;top:391px;width:16px;height:16px;border-radius:2px;background:linear-gradient(135deg,#dce6fc,#c2d3fc 50%,#b0c6f8);border:1px solid #fff;box-sizing:border-box;box-shadow:inset 0 0 0 1px #b6c8f0;">
<svg width="14" height="14" style="position:absolute;left:0;top:0" viewBox="0 0 14 14"><path d="M3 5 L7 9 L11 5" fill="none" stroke="#4d6185" stroke-width="2"/></svg></div><div style="position:absolute;left:1658px;top:93px;width:16px;height:160px;border-radius:2px;background:linear-gradient(to right,#c9d7fd,#bccffc 60%,#b2c8fa);border:1px solid #fff;box-sizing:border-box;box-shadow:inset 0 0 0 1px #a9bef2;"></div><div style="position:absolute;left:1662px;top:169px;width:7px;height:8px;background-image:repeating-linear-gradient(to bottom,#eef3ff 0 1px,#8ea8e0 1px 2px);"></div><div style="position:absolute;left:667px;top:412px;width:1007px;height:238px;background:#fff;border-left:1px solid #000;border-top:1px solid #000;box-sizing:border-box;"></div><div style="position:absolute;left:669px;top:414px;width:1px;height:236px;background:#000;"></div><div style="position:absolute;left:669px;top:413px;width:1005px;height:1px;background:#000;"></div><div style="position:absolute;left:670px;top:414px;width:988px;height:17px;background:linear-gradient(to bottom,#f4f3ec 0,#eeece2 60%,#e4e1d2 100%);box-sizing:border-box;"></div><div style="position:absolute;left:670px;top:429px;width:988px;height:1px;background:#b8b5a6;"></div><div style="position:absolute;left:670px;top:430px;width:988px;height:1px;background:#6e6b5e;"></div><div style="position:absolute;left:709px;top:415px;width:1px;height:15px;background:#7c7a6c;"></div><div style="position:absolute;left:710px;top:415px;width:1px;height:15px;background:#fff;"></div><div class="t11" style="left:675.5px;top:417px;width:35px;overflow:hidden;letter-spacing:-0.3px;">Track</div><div style="position:absolute;left:829px;top:415px;width:1px;height:15px;background:#7c7a6c;"></div><div style="position:absolute;left:830px;top:415px;width:1px;height:15px;background:#fff;"></div><div class="t11" style="left:715px;top:417px;width:114px;overflow:hidden;letter-spacing:-0.3px;">Latitude</div><div style="position:absolute;left:949px;top:415px;width:1px;height:15px;background:#7c7a6c;"></div><div style="position:absolute;left:950px;top:415px;width:1px;height:15px;background:#fff;"></div><div class="t11" style="left:835px;top:417px;width:114px;overflow:hidden;letter-spacing:-0.3px;">Longitude</div><div style="position:absolute;left:1029px;top:415px;width:1px;height:15px;background:#7c7a6c;"></div><div style="position:absolute;left:1030px;top:415px;width:1px;height:15px;background:#fff;"></div><div class="t11" style="left:955px;top:417px;width:74px;overflow:hidden;letter-spacing:-0.3px;">Time</div><div style="position:absolute;left:1089px;top:415px;width:1px;height:15px;background:#7c7a6c;"></div><div style="position:absolute;left:1090px;top:415px;width:1px;height:15px;background:#fff;"></div><div class="t11" style="left:1029px;top:417px;width:54px;text-align:right;overflow:hidden;letter-spacing:-0.3px;">Speed</div><div style="position:absolute;left:670px;top:431px;width:988px;height:218px;overflow:hidden;"><div class="t11" style="left:3.5px;top:1px;width:35px;overflow:hidden;">624</div><div class="t11" style="left:45.5px;top:1px;width:114px;overflow:hidden;">-23.0882872</div><div class="t11" style="left:165.5px;top:1px;width:114px;overflow:hidden;">150.7509394</div><div class="t11" style="left:285.5px;top:1px;width:74px;overflow:hidden;">01:34:55</div><div class="t11" style="left:359px;top:1px;width:54px;text-align:right;">48.38</div><div class="t11" style="left:3.5px;top:15px;width:35px;overflow:hidden;">625</div><div class="t11" style="left:45.5px;top:15px;width:114px;overflow:hidden;">-23.0880717</div><div class="t11" style="left:165.5px;top:15px;width:114px;overflow:hidden;">150.7510328</div><div class="t11" style="left:285.5px;top:15px;width:74px;overflow:hidden;">01:34:56</div><div class="t11" style="left:359px;top:15px;width:54px;text-align:right;">49.98</div><div class="t11" style="left:3.5px;top:29px;width:35px;overflow:hidden;">626</div><div class="t11" style="left:45.5px;top:29px;width:114px;overflow:hidden;">-23.0878653</div><div class="t11" style="left:165.5px;top:29px;width:114px;overflow:hidden;">150.751118</div><div class="t11" style="left:285.5px;top:29px;width:74px;overflow:hidden;">01:34:57</div><div class="t11" style="left:359px;top:29px;width:54px;text-align:right;">47.56</div><div class="t11" style="left:3.5px;top:43px;width:35px;overflow:hidden;">627</div><div class="t11" style="left:45.5px;top:43px;width:114px;overflow:hidden;">-23.0876525</div><div class="t11" style="left:165.5px;top:43px;width:114px;overflow:hidden;">150.7511985</div><div class="t11" style="left:285.5px;top:43px;width:74px;overflow:hidden;">01:34:58</div><div class="t11" style="left:359px;top:43px;width:54px;text-align:right;">48.53</div><div class="t11" style="left:3.5px;top:57px;width:35px;overflow:hidden;">628</div><div class="t11" style="left:45.5px;top:57px;width:114px;overflow:hidden;">-23.0874396</div><div class="t11" style="left:165.5px;top:57px;width:114px;overflow:hidden;">150.7512733</div><div class="t11" style="left:285.5px;top:57px;width:74px;overflow:hidden;">01:34:59</div><div class="t11" style="left:359px;top:57px;width:54px;text-align:right;">48.19</div><div class="t11" style="left:3.5px;top:71px;width:35px;overflow:hidden;">629</div><div class="t11" style="left:45.5px;top:71px;width:114px;overflow:hidden;">-23.0870044</div><div class="t11" style="left:165.5px;top:71px;width:114px;overflow:hidden;">150.7513859</div><div class="t11" style="left:285.5px;top:71px;width:74px;overflow:hidden;">01:35:01</div><div class="t11" style="left:359px;top:71px;width:54px;text-align:right;">48.17</div><div class="t11" style="left:3.5px;top:85px;width:35px;overflow:hidden;">630</div><div class="t11" style="left:45.5px;top:85px;width:114px;overflow:hidden;">-23.0863319</div><div class="t11" style="left:165.5px;top:85px;width:114px;overflow:hidden;">150.7514925</div><div class="t11" style="left:285.5px;top:85px;width:74px;overflow:hidden;">01:35:04</div><div class="t11" style="left:359px;top:85px;width:54px;text-align:right;">48.77</div><div style="position:absolute;left:2px;top:98px;width:986px;height:14px;background:#316ac5;"></div><div class="t11" style="left:3.5px;top:99px;width:35px;overflow:hidden;color:#fff;">631</div><div class="t11" style="left:45.5px;top:99px;width:114px;overflow:hidden;color:#fff;">-23.0863319</div><div class="t11" style="left:165.5px;top:99px;width:114px;overflow:hidden;color:#fff;">150.7514925</div><div class="t11" style="left:285.5px;top:99px;width:74px;overflow:hidden;color:#fff;">01:35:04</div><div class="t11" style="left:359px;top:99px;width:54px;text-align:right;color:#fff;">0</div><div class="t11" style="left:3.5px;top:113px;width:35px;overflow:hidden;">632</div><div class="t11" style="left:45.5px;top:113px;width:114px;overflow:hidden;">-23.0861122</div><div class="t11" style="left:165.5px;top:113px;width:114px;overflow:hidden;">150.7515144</div><div class="t11" style="left:285.5px;top:113px;width:74px;overflow:hidden;">01:35:05</div><div class="t11" style="left:359px;top:113px;width:54px;text-align:right;">47.5</div><div class="t11" style="left:3.5px;top:127px;width:35px;overflow:hidden;">633</div><div class="t11" style="left:45.5px;top:127px;width:114px;overflow:hidden;">-23.0858846</div><div class="t11" style="left:165.5px;top:127px;width:114px;overflow:hidden;">150.751536</div><div class="t11" style="left:285.5px;top:127px;width:74px;overflow:hidden;">01:35:06</div><div class="t11" style="left:359px;top:127px;width:54px;text-align:right;">49.18</div><div class="t11" style="left:3.5px;top:141px;width:35px;overflow:hidden;">634</div><div class="t11" style="left:45.5px;top:141px;width:114px;overflow:hidden;">-23.0856578</div><div class="t11" style="left:165.5px;top:141px;width:114px;overflow:hidden;">150.7515559</div><div class="t11" style="left:285.5px;top:141px;width:74px;overflow:hidden;">01:35:07</div><div class="t11" style="left:359px;top:141px;width:54px;text-align:right;">48.98</div><div class="t11" style="left:3.5px;top:155px;width:35px;overflow:hidden;">635</div><div class="t11" style="left:45.5px;top:155px;width:114px;overflow:hidden;">-23.0854195</div><div class="t11" style="left:165.5px;top:155px;width:114px;overflow:hidden;">150.7515724</div><div class="t11" style="left:285.5px;top:155px;width:74px;overflow:hidden;">01:35:08</div><div class="t11" style="left:359px;top:155px;width:54px;text-align:right;">51.4</div><div class="t11" style="left:3.5px;top:169px;width:35px;overflow:hidden;">636</div><div class="t11" style="left:45.5px;top:169px;width:114px;overflow:hidden;">-23.0851957</div><div class="t11" style="left:165.5px;top:169px;width:114px;overflow:hidden;">150.7515835</div><div class="t11" style="left:285.5px;top:169px;width:74px;overflow:hidden;">01:35:09</div><div class="t11" style="left:359px;top:169px;width:54px;text-align:right;">48.23</div><div class="t11" style="left:3.5px;top:183px;width:35px;overflow:hidden;">637</div><div class="t11" style="left:45.5px;top:183px;width:114px;overflow:hidden;">-23.0849612</div><div class="t11" style="left:165.5px;top:183px;width:114px;overflow:hidden;">150.75159</div><div class="t11" style="left:285.5px;top:183px;width:74px;overflow:hidden;">01:35:10</div><div class="t11" style="left:359px;top:183px;width:54px;text-align:right;">50.5</div><div class="t11" style="left:3.5px;top:197px;width:35px;overflow:hidden;">638</div><div class="t11" style="left:45.5px;top:197px;width:114px;overflow:hidden;">-23.0847288</div><div class="t11" style="left:165.5px;top:197px;width:114px;overflow:hidden;">150.7515959</div><div class="t11" style="left:285.5px;top:197px;width:74px;overflow:hidden;">01:35:11</div><div class="t11" style="left:359px;top:197px;width:54px;text-align:right;">50.04</div><div class="t11" style="left:3.5px;top:211px;width:35px;overflow:hidden;">639</div><div class="t11" style="left:45.5px;top:211px;width:114px;overflow:hidden;">-23.0844876</div><div class="t11" style="left:165.5px;top:211px;width:114px;overflow:hidden;">150.7516018</div><div class="t11" style="left:285.5px;top:211px;width:74px;overflow:hidden;">01:35:12</div><div class="t11" style="left:359px;top:211px;width:54px;text-align:right;">51.94</div></div><div style="position:absolute;left:1658px;top:414px;width:16px;height:236px;background:#fbfbf8;"></div><div style="position:absolute;left:1658px;top:415px;width:16px;height:16px;border-radius:2px;background:linear-gradient(135deg,#dce6fc,#c2d3fc 50%,#b0c6f8);border:1px solid #fff;box-sizing:border-box;box-shadow:inset 0 0 0 1px #b6c8f0;">
<svg width="14" height="14" style="position:absolute;left:0;top:0" viewBox="0 0 14 14"><path d="M3 9 L7 5 L11 9" fill="none" stroke="#4d6185" stroke-width="2"/></svg></div><div style="position:absolute;left:1658px;top:634px;width:16px;height:16px;border-radius:2px;background:linear-gradient(135deg,#dce6fc,#c2d3fc 50%,#b0c6f8);border:1px solid #fff;box-sizing:border-box;box-shadow:inset 0 0 0 1px #b6c8f0;">
<svg width="14" height="14" style="position:absolute;left:0;top:0" viewBox="0 0 14 14"><path d="M3 5 L7 9 L11 5" fill="none" stroke="#4d6185" stroke-width="2"/></svg></div><div style="position:absolute;left:1658px;top:581px;width:16px;height:8px;border-radius:2px;background:linear-gradient(to right,#c9d7fd,#bccffc 60%,#b2c8fa);border:1px solid #fff;box-sizing:border-box;box-shadow:inset 0 0 0 1px #a9bef2;"></div><div style="position:absolute;left:0;top:660px;width:1680px;height:338px;background:#fff;border-top:1px solid #000;border-left:2px solid #000;box-sizing:border-box;"></div><div style="position:absolute;left:0;top:660px;width:1px;height:338px;background:#aca899;"></div><svg style="position:absolute;left:0;top:0" width="1680" height="1048" viewBox="0 0 1680 1048"><defs><clipPath id="cc"><rect x="2" y="661" width="1678" height="321"/></clipPath></defs><g clip-path="url(#cc)"><line x1="18" y1="688.5" x2="1680" y2="688.5" stroke="#c6c6c6" stroke-width="1"/><line x1="18" y1="715.5" x2="1680" y2="715.5" stroke="#c6c6c6" stroke-width="1"/><line x1="18" y1="743.5" x2="1680" y2="743.5" stroke="#c6c6c6" stroke-width="1"/><line x1="18" y1="771.5" x2="1680" y2="771.5" stroke="#c6c6c6" stroke-width="1"/><line x1="18" y1="799.5" x2="1680" y2="799.5" stroke="#c6c6c6" stroke-width="1"/><line x1="18" y1="826.5" x2="1680" y2="826.5" stroke="#c6c6c6" stroke-width="1"/><line x1="18" y1="854.5" x2="1680" y2="854.5" stroke="#c6c6c6" stroke-width="1"/><line x1="18" y1="882.5" x2="1680" y2="882.5" stroke="#c6c6c6" stroke-width="1"/><line x1="18" y1="910.5" x2="1680" y2="910.5" stroke="#c6c6c6" stroke-width="1"/><line x1="18" y1="937.5" x2="1680" y2="937.5" stroke="#c6c6c6" stroke-width="1"/><line x1="112.5" y1="966" x2="112.5" y2="981" stroke="#d0d0d0" stroke-width="1"/><line x1="216.5" y1="966" x2="216.5" y2="981" stroke="#d0d0d0" stroke-width="1"/><line x1="314.5" y1="966" x2="314.5" y2="981" stroke="#d0d0d0" stroke-width="1"/><line x1="419.0" y1="966" x2="419.0" y2="981" stroke="#d0d0d0" stroke-width="1"/><line x1="532.0" y1="966" x2="532.0" y2="981" stroke="#d0d0d0" stroke-width="1"/><line x1="647.5" y1="966" x2="647.5" y2="981" stroke="#d0d0d0" stroke-width="1"/><line x1="750.0" y1="966" x2="750.0" y2="981" stroke="#d0d0d0" stroke-width="1"/><line x1="855.5" y1="966" x2="855.5" y2="981" stroke="#d0d0d0" stroke-width="1"/><line x1="961.5" y1="966" x2="961.5" y2="981" stroke="#d0d0d0" stroke-width="1"/><line x1="1070.5" y1="966" x2="1070.5" y2="981" stroke="#d0d0d0" stroke-width="1"/><line x1="1178.5" y1="966" x2="1178.5" y2="981" stroke="#d0d0d0" stroke-width="1"/><line x1="1284.5" y1="966" x2="1284.5" y2="981" stroke="#d0d0d0" stroke-width="1"/><line x1="1388.5" y1="966" x2="1388.5" y2="981" stroke="#d0d0d0" stroke-width="1"/><line x1="1494.5" y1="966" x2="1494.5" y2="981" stroke="#d0d0d0" stroke-width="1"/></g></svg><div style="position:absolute;font:bold 14px 'Liberation Sans',sans-serif;line-height:14px;left:3px;top:680.5px;color:#c8c8c8;">50</div><div style="position:absolute;font:bold 14px 'Liberation Sans',sans-serif;line-height:14px;left:3px;top:708.2px;color:#c8c8c8;">45</div><div style="position:absolute;font:bold 14px 'Liberation Sans',sans-serif;line-height:14px;left:3px;top:736.0px;color:#c8c8c8;">40</div><div style="position:absolute;font:bold 14px 'Liberation Sans',sans-serif;line-height:14px;left:3px;top:763.8px;color:#c8c8c8;">35</div><div style="position:absolute;font:bold 14px 'Liberation Sans',sans-serif;line-height:14px;left:3px;top:791.5px;color:#c8c8c8;">30</div><div style="position:absolute;font:bold 14px 'Liberation Sans',sans-serif;line-height:14px;left:3px;top:819.2px;color:#c8c8c8;">25</div><div style="position:absolute;font:bold 14px 'Liberation Sans',sans-serif;line-height:14px;left:3px;top:847.0px;color:#c8c8c8;">20</div><div style="position:absolute;font:bold 14px 'Liberation Sans',sans-serif;line-height:14px;left:3px;top:874.8px;color:#c8c8c8;">15</div><div style="position:absolute;font:bold 14px 'Liberation Sans',sans-serif;line-height:14px;left:3px;top:902.5px;color:#c8c8c8;">10</div><div style="position:absolute;font:bold 14px 'Liberation Sans',sans-serif;line-height:14px;left:3px;top:930.2px;color:#c8c8c8;">5</div><div style="position:absolute;font:bold 14px 'Liberation Sans',sans-serif;line-height:14px;left:115px;top:967px;color:#c4c4c4;">01:24</div><div style="position:absolute;font:bold 14px 'Liberation Sans',sans-serif;line-height:14px;left:219px;top:967px;color:#c4c4c4;">01:25</div><div style="position:absolute;font:bold 14px 'Liberation Sans',sans-serif;line-height:14px;left:317px;top:967px;color:#c4c4c4;">01:26</div><div style="position:absolute;font:bold 14px 'Liberation Sans',sans-serif;line-height:14px;left:421.5px;top:967px;color:#c4c4c4;">01:27</div><div style="position:absolute;font:bold 14px 'Liberation Sans',sans-serif;line-height:14px;left:534.5px;top:967px;color:#c4c4c4;">01:28</div><div style="position:absolute;font:bold 14px 'Liberation Sans',sans-serif;line-height:14px;left:650px;top:967px;color:#c4c4c4;">01:29</div><div style="position:absolute;font:bold 14px 'Liberation Sans',sans-serif;line-height:14px;left:752.5px;top:967px;color:#c4c4c4;">01:30</div><div style="position:absolute;font:bold 14px 'Liberation Sans',sans-serif;line-height:14px;left:858px;top:967px;color:#c4c4c4;">01:31</div><div style="position:absolute;font:bold 14px 'Liberation Sans',sans-serif;line-height:14px;left:964px;top:967px;color:#c4c4c4;">01:32</div><div style="position:absolute;font:bold 14px 'Liberation Sans',sans-serif;line-height:14px;left:1073px;top:967px;color:#c4c4c4;">01:33</div><div style="position:absolute;font:bold 14px 'Liberation Sans',sans-serif;line-height:14px;left:1181px;top:967px;color:#c4c4c4;">01:34</div><div style="position:absolute;font:bold 14px 'Liberation Sans',sans-serif;line-height:14px;left:1287px;top:967px;color:#c4c4c4;">01:35</div><div style="position:absolute;font:bold 14px 'Liberation Sans',sans-serif;line-height:14px;left:1391px;top:967px;color:#c4c4c4;">01:36</div><div style="position:absolute;font:bold 14px 'Liberation Sans',sans-serif;line-height:14px;left:1497px;top:967px;color:#c4c4c4;">01:37</div><div style="position:absolute;font:bold 14px 'Liberation Sans',sans-serif;line-height:14px;left:1663px;top:818.5px;color:#e8a048;">10</div><div style="position:absolute;font:bold 14px 'Liberation Sans',sans-serif;line-height:14px;left:1663px;top:846.5px;color:#e8a048;">8</div><div style="position:absolute;font:bold 14px 'Liberation Sans',sans-serif;line-height:14px;left:1663px;top:874.5px;color:#e8a048;">6</div><div style="position:absolute;font:bold 14px 'Liberation Sans',sans-serif;line-height:14px;left:1663px;top:902.5px;color:#e8a048;">4</div><div style="position:absolute;font:bold 14px 'Liberation Sans',sans-serif;line-height:14px;left:1663px;top:930.0px;color:#e8a048;">2</div><div style="position:absolute;font:bold 14px 'Liberation Sans',sans-serif;line-height:14px;left:1612px;top:967px;color:#484848;">Zoom=0.0</div><svg style="position:absolute;left:0;top:0" width="1680" height="1048" viewBox="0 0 1680 1048"><defs><clipPath id="cd"><rect x="2" y="661" width="1678" height="321"/></clipPath></defs><g clip-path="url(#cd)"><polyline points="2.50,854.00 7.50,840.00 31.00,840.00 33.75,854.00 36.00,840.00 55.00,840.00 58.00,826.00 72.50,826.00 79.50,854.00 82.50,840.00 102.50,840.00 105.00,826.00 231.00,826.00 233.75,840.00 241.00,840.00 243.50,826.00 245.50,826.00 247.50,840.00 279.00,840.00 281.00,826.00 310.00,826.00 314.00,840.00 321.00,840.00 323.50,826.00 329.00,826.00 331.50,840.00 359.00,840.00 362.00,868.00 366.00,868.00 369.50,826.00 384.00,826.00 386.00,840.00 389.00,826.00 482.50,826.00 490.00,854.00 492.50,840.00 502.50,840.00 505.00,826.00 550.00,826.00 552.50,840.00 555.00,826.00 570.00,826.00 572.50,840.00 612.50,840.00 615.00,826.00 627.50,826.00 630.00,840.00 676.00,840.00 678.00,854.00 681.00,840.00 755.00,840.00 757.50,868.00 784.00,868.00 786.00,854.00 817.50,854.00 820.00,840.00 890.00,840.00 892.50,854.00 906.00,854.00 909.00,840.00 984.00,840.00 986.00,854.00 989.00,840.00 1036.00,840.00 1037.50,854.00 1039.50,840.00 1085.00,840.00 1087.50,826.00 1099.00,826.00 1101.00,840.00 1186.00,840.00 1189.00,826.00 1199.00,826.00 1201.00,840.00 1204.00,840.00 1206.00,826.00 1236.00,826.00 1237.50,840.00 1240.00,826.00 1245.00,840.00 1249.00,826.00 1270.00,826.00 1272.50,840.00 1280.00,840.00 1282.50,826.00 1292.50,826.00 1294.50,840.00 1296.00,826.00 1365.00,826.00 1366.00,834.00 1367.50,826.00 1415.00,826.00 1417.50,840.00 1420.00,826.00 1546.00,826.00 1547.50,840.00 1550.00,840.00 1553.75,854.00 1556.00,840.00 1592.50,840.00 1595.00,826.00 1611.00,826.00 1614.00,840.00 1659.00,840.00 1661.00,826.00 1676.00,826.00 1678.00,836.00 1681.00,830.00" fill="none" stroke="#f0b070" stroke-width="1" shape-rendering="crispEdges"/><polyline points="87.50,955.27 89.50,955.46 91.50,954.21 93.50,954.18 95.50,953.82 97.50,951.38 99.50,949.86 101.50,950.57 103.50,952.55 105.50,953.78 107.50,953.24 109.50,950.43 111.50,947.64 113.50,946.63 115.50,947.52 117.50,950.22 119.50,953.49 121.50,956.54 123.50,959.10 125.50,961.25 127.50,962.62 129.50,961.19 131.50,956.74 133.50,950.92 135.50,946.92 137.50,945.06 139.50,945.64 141.50,948.55 143.50,952.02 145.50,944.26 147.50,916.10 149.50,885.80 151.50,853.32 153.50,838.17 155.50,829.56 157.50,824.42 159.50,823.17 161.50,822.75 163.50,820.87 165.50,818.89 167.50,819.80 169.50,823.80 171.50,828.86 173.50,831.86 175.50,831.69 177.50,828.16 179.50,824.65 181.50,822.39 183.50,822.05 185.50,822.02 187.50,820.24 189.50,816.70 191.50,812.50 193.50,808.66 195.50,804.95 197.50,802.68 199.50,802.79 201.50,805.60 203.50,808.69 205.50,808.12 207.50,806.74 209.50,806.64 211.50,807.28 213.50,807.53 215.50,806.70 217.50,806.22 219.50,808.34 221.50,809.57 223.50,807.98 225.50,804.53 227.50,802.37 229.50,807.21 231.50,813.09 233.50,817.53 235.50,817.31 237.50,811.09 239.50,805.17 241.50,799.48 243.50,794.44 245.50,790.21 247.50,787.51 249.50,786.15 251.50,785.07 253.50,784.02 255.50,783.28 257.50,783.19 259.50,784.30 261.50,785.70 263.50,786.61 265.50,786.57 267.50,786.69 269.50,787.54 271.50,787.95 273.50,787.84 275.50,788.46 277.50,790.12 279.50,791.52 281.50,790.64 283.50,787.35 285.50,784.95 287.50,785.11 289.50,786.06 291.50,785.37 293.50,782.36 295.50,777.96 297.50,775.00 299.50,774.88 301.50,777.63 303.50,782.25 305.50,786.56 307.50,790.77 309.50,795.25 311.50,800.10 313.50,804.40 315.50,807.97 317.50,810.62 319.50,811.70 321.50,811.31 323.50,809.18 325.50,805.76 327.50,801.81 329.50,798.50 331.50,797.39 333.50,799.06 335.50,806.40 337.50,819.76 339.50,839.71 341.50,864.08 343.50,889.12 345.50,911.85 347.50,931.69 349.50,945.87 351.50,955.64 353.50,960.79 355.50,962.84 357.50,963.85 359.50,963.84 361.50,963.55 363.50,962.29 365.50,955.15 367.50,941.55 369.50,922.57 371.50,901.98 373.50,884.08 375.50,868.48 377.50,855.16 379.50,843.52 381.50,833.30 383.50,823.86 385.50,815.23 387.50,807.14 389.50,799.81 391.50,793.65 393.50,790.67 395.50,790.36 397.50,791.06 399.50,790.91 401.50,788.80 403.50,786.20 405.50,783.87 407.50,782.63 409.50,782.47 411.50,782.35 413.50,781.36 415.50,780.83 417.50,780.94 419.50,780.07 421.50,777.54 423.50,775.14 425.50,772.77 427.50,773.22 429.50,774.65 431.50,776.86 433.50,781.06 435.50,785.75 437.50,790.92 439.50,797.31 441.50,804.76 443.50,813.22 445.50,821.47 447.50,826.98 449.50,831.40 451.50,836.40 453.50,843.96 455.50,853.50 457.50,860.18 459.50,862.35 461.50,858.76 463.50,851.79 465.50,842.57 467.50,833.22 469.50,825.39 471.50,819.34 473.50,814.58 475.50,809.78 477.50,805.06 479.50,801.14 481.50,797.92 483.50,793.52 485.50,787.99 487.50,782.88 489.50,781.50 491.50,780.78 493.50,779.50 495.50,778.43 497.50,778.39 499.50,780.20 501.50,782.24 503.50,784.60 505.50,788.31 507.50,793.52 509.50,796.61 511.50,796.08 513.50,791.77 515.50,786.27 517.50,783.76 519.50,781.24 521.50,779.01 523.50,775.70 525.50,772.32 527.50,770.08 529.50,768.54 531.50,767.99 533.50,769.69 535.50,773.76 537.50,778.40 539.50,784.11 541.50,791.46 543.50,802.37 545.50,816.30 547.50,832.10 549.50,844.89 551.50,852.57 553.50,852.57 555.50,847.16 557.50,839.68 559.50,833.44 561.50,829.96 563.50,830.39 565.50,834.68 567.50,838.68 569.50,841.86 571.50,844.00 573.50,849.14 575.50,858.57 577.50,871.18 579.50,883.29 581.50,894.57 583.50,904.14 585.50,911.57 587.50,915.86 589.50,916.36 591.50,912.77 593.50,904.93 595.50,893.00 597.50,878.04 599.50,865.54 601.50,857.33 603.50,854.97 605.50,855.66 607.50,856.10 609.50,855.87 611.50,856.35 613.50,858.44 615.50,860.25 617.50,860.89 619.50,859.59 621.50,858.64 623.50,859.82 625.50,865.03 627.50,873.60 629.50,887.21 631.50,904.43 633.50,922.53 635.50,937.59 637.50,940.67 639.50,934.96 641.50,923.18 643.50,913.18 645.50,907.91 647.50,904.43 649.50,895.57 651.50,875.66 653.50,850.34 655.50,823.00 657.50,807.14 659.50,799.19 661.50,795.23 663.50,791.43 665.50,787.14 667.50,784.26 669.50,783.54 671.50,784.43 673.50,785.11 675.50,785.04 677.50,783.90 679.50,781.94 681.50,777.35 683.50,773.10 685.50,772.20 687.50,772.24 689.50,774.21 691.50,772.97 693.50,770.74 695.50,768.59 697.50,766.60 699.50,765.31 701.50,764.89 703.50,765.86 705.50,767.89 707.50,767.95 709.50,763.98 711.50,761.30 713.50,761.14 715.50,765.29 717.50,771.91 719.50,774.38 721.50,774.61 723.50,774.08 725.50,774.88 727.50,780.41 729.50,791.98 731.50,808.03 733.50,826.82 735.50,844.64 737.50,861.21 739.50,877.54 741.50,894.82 743.50,913.01 745.50,931.30 747.50,946.15 749.50,955.87 751.50,960.80 753.50,961.83 755.50,962.41 757.50,962.86 759.50,963.18 761.50,963.48 763.50,963.62" fill="none" stroke="#4a9a5a" stroke-width="1"/><polyline points="842.00,962.75 844.00,961.46 846.00,960.07 848.00,958.40 850.00,955.20 852.00,938.88 854.00,913.94 856.00,891.47 858.00,868.96 860.00,859.87 862.00,846.02 864.00,834.41 866.00,826.02 868.00,817.46 870.00,808.39 872.00,798.63 874.00,789.43 876.00,784.42 878.00,778.50 880.00,775.12 882.00,772.13 884.00,770.82 886.00,773.95 888.00,776.36 890.00,776.83 892.00,779.53 894.00,781.40 896.00,783.12 898.00,782.55 900.00,781.32 902.00,782.62 904.00,783.78 906.00,783.80 908.00,780.21 910.00,777.49 912.00,776.41 914.00,777.19 916.00,778.64 918.00,780.66 920.00,783.24 922.00,785.03 924.00,783.96 926.00,779.78 928.00,774.37 930.00,772.52 932.00,773.23 934.00,776.50 936.00,779.06 938.00,783.39 940.00,789.61 942.00,796.58 944.00,802.89 946.00,809.09 948.00,815.77 950.00,824.57 952.00,835.07 954.00,848.07 956.00,866.43 958.00,889.07 960.00,914.29 962.00,936.50 964.00,943.93 966.00,937.64 968.00,921.64 970.00,903.06 972.00,888.41 974.00,874.19 976.00,859.69 978.00,845.38 980.00,832.57 982.00,821.43 984.00,812.79 986.00,805.62 988.00,799.50 990.00,794.41 992.00,791.01 994.00,789.08 996.00,787.24 998.00,784.83 1000.00,781.71 1002.00,779.29 1004.00,776.24 1006.00,772.63 1008.00,769.64 1010.00,767.70 1012.00,767.16 1014.00,765.61 1016.00,763.02 1018.00,760.40 1020.00,758.41 1022.00,757.00 1024.00,756.38 1026.00,756.71 1028.00,757.76 1030.00,758.57 1032.00,758.94 1034.00,759.73 1036.00,760.99 1038.00,762.61 1040.00,764.79 1042.00,766.40 1044.00,766.71 1046.00,764.93 1048.00,761.65 1050.00,760.41 1052.00,762.21 1054.00,763.87 1056.00,763.82 1058.00,761.25 1060.00,758.90 1062.00,758.61 1064.00,758.79 1066.00,757.46 1068.00,754.64 1070.00,753.86 1072.00,754.95 1074.00,755.87 1076.00,754.86 1078.00,753.43 1080.00,754.20 1082.00,757.84 1084.00,760.23 1086.00,758.55 1088.00,753.89 1090.00,750.51 1092.00,750.22 1094.00,750.90 1096.00,749.22 1098.00,743.47 1100.00,736.53 1102.00,732.39 1104.00,732.05 1106.00,735.75 1108.00,735.89 1110.00,734.57 1112.00,733.71 1114.00,732.14 1116.00,731.14 1118.00,725.46 1120.00,717.74 1122.00,711.86 1124.00,704.80 1126.00,699.97 1128.00,700.29 1130.00,700.07 1132.00,704.06 1134.00,703.49 1136.00,702.23 1138.00,700.57 1140.00,698.48 1142.00,698.55 1144.00,701.38 1146.00,707.65 1148.00,716.58 1150.00,722.89 1152.00,724.47 1154.00,719.31 1156.00,712.80 1158.00,711.82 1160.00,710.12 1162.00,711.84 1164.00,711.93 1166.00,715.64 1168.00,721.07 1170.00,724.66 1172.00,725.90 1174.00,726.84 1176.00,730.43 1178.00,737.21 1180.00,747.82 1182.00,759.55 1184.00,773.21 1186.00,789.10 1188.00,805.71 1190.00,818.75 1192.00,825.36 1194.00,827.43 1196.00,827.68 1198.00,829.19 1200.00,830.61 1202.00,830.79 1204.00,830.06 1206.00,829.49 1208.00,829.40 1210.00,829.55 1212.00,828.88 1214.00,827.28 1216.00,824.49 1218.00,820.72 1220.00,816.44 1222.00,810.07 1224.00,799.43 1226.00,785.12 1228.00,769.32 1230.00,755.83 1232.00,745.58 1234.00,737.58 1236.00,730.34 1238.00,723.59 1240.00,717.02 1242.00,712.00 1244.00,710.73 1246.00,711.55 1248.00,712.58 1250.00,713.93 1252.00,714.83 1254.00,715.33 1256.00,714.74 1258.00,708.80 1260.00,700.70 1262.00,695.40 1264.00,693.71 1266.00,694.96 1268.00,696.33 1270.00,695.09 1272.00,693.29 1274.00,692.23 1276.00,693.64 1278.00,695.40 1280.00,697.04 1282.00,696.64 1284.00,694.66 1286.00,693.07 1288.00,691.65 1290.00,689.86 1292.00,687.41 1294.00,685.50 1296.00,685.01 1298.00,684.71 1300.00,683.81 1302.00,682.07 1304.00,682.00 1306.00,684.60 1308.00,687.45 1310.00,687.74 1312.00,684.88 1314.00,682.79 1316.00,683.98 1318.00,684.86 1320.00,684.21 1322.00,683.09 1324.00,682.93 1326.00,683.65 1328.00,683.21 1330.00,680.61 1332.00,679.02 1334.00,679.74 1336.00,681.31 1338.00,683.27 1340.00,685.55 1342.00,688.36 1344.00,692.43 1346.00,697.46 1348.00,703.10 1350.00,708.43 1352.00,714.21 1354.00,722.37 1356.00,732.05 1358.00,742.21 1360.00,752.35 1362.00,770.14 1364.00,793.66 1366.00,821.57 1368.00,845.61 1370.00,853.09 1372.00,848.61 1374.00,833.68 1376.00,817.73 1378.00,803.75 1380.00,791.95 1382.00,781.09 1384.00,771.15 1386.00,762.67 1388.00,755.68 1390.00,750.19 1392.00,746.00 1394.00,742.64 1396.00,740.14 1398.00,738.73 1400.00,738.90 1402.00,740.00 1404.00,742.03 1406.00,743.58 1408.00,743.67 1410.00,742.18 1412.00,738.48 1414.00,733.51 1416.00,729.31 1418.00,728.28 1420.00,730.96 1422.00,736.81 1424.00,742.90 1426.00,748.76 1428.00,753.81 1430.00,756.46 1432.00,757.80 1434.00,759.60 1436.00,763.63 1438.00,770.14 1440.00,776.56 1442.00,782.34 1444.00,788.57 1446.00,796.07 1448.00,805.00 1450.00,814.14 1452.00,822.14 1454.00,829.20 1456.00,836.18 1458.00,843.99 1460.00,852.75 1462.00,859.35 1464.00,861.24 1466.00,863.87 1468.00,866.86 1470.00,873.04 1472.00,880.09 1474.00,889.50 1476.00,900.36 1478.00,909.36 1480.00,910.79 1482.00,904.43 1484.00,895.79 1486.00,889.71 1488.00,886.79 1490.00,887.43 1492.00,889.43 1494.00,892.98 1496.00,900.86 1498.00,907.46 1500.00,914.00 1502.00,918.50 1504.00,921.73 1506.00,926.39 1508.00,928.07 1510.00,928.12 1512.00,927.35 1514.00,925.73 1516.00,922.43 1518.00,916.29 1520.00,908.61 1522.00,901.69 1524.00,892.50 1526.00,880.17 1528.00,872.62 1530.00,867.56 1532.00,866.25 1534.00,864.62 1536.00,858.11 1538.00,852.44 1540.00,847.70 1542.00,844.33 1544.00,841.79 1546.00,839.95 1548.00,838.45 1550.00,836.77 1552.00,834.04 1554.00,829.36 1556.00,821.66 1558.00,821.43 1560.00,818.64 1562.00,817.40 1564.00,814.20 1566.00,811.11 1568.00,812.19 1570.00,812.54 1572.00,811.26 1574.00,808.84 1576.00,808.04 1578.00,808.60 1580.00,808.58 1582.00,806.45 1584.00,803.16 1586.00,801.16 1588.00,800.71 1590.00,800.19 1592.00,798.11 1594.00,794.75 1596.00,791.33 1598.00,788.25 1600.00,786.25 1602.00,785.38 1604.00,785.62 1606.00,785.93 1608.00,784.70 1610.00,785.21 1612.00,787.07 1614.00,788.71 1616.00,789.34 1618.00,787.26 1620.00,786.07 1622.00,786.60 1624.00,786.49 1626.00,786.71 1628.00,788.82 1630.00,790.09 1632.00,791.57 1634.00,789.00 1636.00,784.16 1638.00,780.02 1640.00,777.07 1642.00,776.30 1644.00,776.07 1646.00,774.47 1648.00,772.50 1650.00,773.00 1652.00,774.00 1654.00,775.00 1656.00,773.62 1658.00,771.46 1660.00,770.54 1662.00,770.88 1664.00,772.15 1666.00,774.19 1668.00,776.71 1670.00,778.29 1672.00,778.71 1674.00,779.50 1676.00,780.90 1678.00,782.09 1680.00,783.33" fill="none" stroke="#4a9a5a" stroke-width="1"/><polyline points="2.00,965.00 4.00,947.50 6.00,930.00 8.00,899.38 10.00,868.75 12.25,916.25 14.50,963.75 16.33,963.83 18.17,963.92 20.00,964.00 21.67,964.08 23.33,964.17 25.00,964.25 26.67,964.33 28.33,964.42 30.00,964.50 31.67,964.58 33.33,964.67 35.00,964.75 36.67,964.83 38.33,964.92 40.00,965.00 41.67,964.83 43.33,964.67 45.00,964.50 46.67,964.33 48.33,964.17 50.00,964.00 51.67,964.17 53.33,964.33 55.00,964.50 56.67,964.67 58.33,964.83 60.00,965.00 61.67,965.00 63.33,965.00 65.00,965.00 66.67,965.00 68.33,965.00 70.00,965.00 71.71,965.00 73.43,965.00 75.14,965.00 76.86,965.00 78.57,965.00 80.29,965.00 82.00,965.00 83.83,965.00 85.67,965.00 87.50,965.00 90.00,946.00 92.00,957.50 93.50,956.25 95.00,955.00 96.67,953.60 98.33,948.26 100.00,947.50 102.50,950.00 105.00,957.50 106.75,956.13 108.50,950.13 110.25,951.16 112.00,945.76 113.75,943.75 115.42,947.29 117.08,947.22 118.75,952.50 120.42,955.00 122.08,957.50 123.75,960.00 125.83,961.67 127.92,963.33 130.00,965.00 131.67,957.50 133.33,951.14 135.00,942.50 136.88,943.91 138.75,947.50 141.25,942.50 143.12,953.94 145.00,960.00 147.00,957.50 148.50,896.25 150.00,835.00 151.00,862.50 152.38,848.75 153.75,835.00 156.00,821.00 158.00,820.35 160.00,825.00 161.88,826.93 163.75,821.00 165.62,815.33 167.50,815.00 169.17,824.90 170.83,826.81 172.50,835.00 174.17,836.56 175.83,827.63 177.50,830.00 179.25,827.33 181.00,819.00 182.67,817.41 184.33,826.35 186.00,825.00 188.00,818.78 190.00,815.00 191.67,815.65 193.33,805.93 195.00,806.00 196.88,804.43 198.75,798.75 200.62,802.02 202.50,807.50 205.00,815.00 206.88,810.90 208.75,798.75 210.62,804.22 212.50,815.00 214.25,811.02 216.00,800.00 217.67,800.59 219.33,812.83 221.00,814.00 222.67,805.94 224.33,808.72 226.00,802.50 228.00,796.82 230.00,798.75 232.50,827.50 234.25,823.81 236.00,815.00 238.00,805.23 240.00,804.00 241.88,802.33 243.75,792.50 245.42,788.66 247.08,788.98 248.75,785.00 250.62,783.74 252.50,786.00 254.25,787.88 256.00,781.00 257.67,780.14 259.33,787.53 261.00,786.00 262.67,784.45 264.33,789.78 266.00,787.50 267.38,783.90 268.75,785.00 270.62,790.23 272.50,791.00 274.25,784.45 276.00,784.00 278.00,793.79 280.00,797.50 281.67,787.84 283.33,789.89 285.00,781.00 286.67,779.42 288.33,790.33 290.00,789.00 291.88,781.28 293.75,782.50 295.42,781.68 297.08,772.60 298.75,770.00 300.42,778.60 302.08,774.79 303.75,783.75 305.62,791.04 307.50,790.00 309.58,792.34 311.67,804.17 313.75,806.00 315.83,806.93 317.92,815.24 320.00,814.00 321.67,808.83 323.33,811.66 325.00,807.50 327.00,801.78 329.00,802.49 331.00,794.00 332.67,792.37 334.33,800.98 336.00,802.50 337.38,815.00 338.75,827.50 341.00,857.50 343.00,883.75 345.00,910.00 346.67,925.00 348.33,940.00 350.00,955.00 351.67,958.00 353.33,961.00 355.00,964.00 356.67,964.00 358.33,964.00 360.00,964.00 362.00,963.50 364.00,963.00 366.00,962.50 368.00,938.75 370.00,915.00 371.88,897.50 373.75,880.00 375.62,866.88 377.50,853.75 379.25,840.57 381.00,835.00 382.67,829.94 384.33,818.47 386.00,812.50 388.00,807.03 390.00,797.50 391.88,788.06 393.75,786.00 395.62,794.05 397.50,794.00 399.17,790.68 400.83,792.82 402.50,787.50 404.17,784.18 405.83,786.68 407.50,781.00 409.17,779.84 410.83,787.08 412.50,784.00 414.25,776.32 416.00,777.50 418.00,784.02 420.00,785.00 421.88,772.38 423.75,768.75 426.00,776.00 427.38,775.58 428.75,771.00 430.83,774.06 432.92,782.77 435.00,784.00 436.67,787.39 438.33,794.69 440.00,797.50 441.67,802.57 443.33,815.64 445.00,820.00 447.50,831.00 449.25,828.95 451.00,830.00 452.38,838.65 453.75,845.00 455.62,850.96 457.50,865.00 459.25,866.60 461.00,864.00 463.00,850.14 465.00,845.00 466.67,841.14 468.33,826.68 470.00,821.00 471.67,820.78 473.33,812.51 475.00,812.50 476.88,809.50 478.75,800.00 480.42,796.08 482.08,801.29 483.75,797.50 485.00,787.50 486.88,779.33 488.75,777.50 490.62,785.54 492.50,785.00 494.25,775.98 496.00,772.50 498.00,780.76 500.00,784.00 501.88,778.98 503.75,781.00 505.62,789.83 507.50,795.00 510.00,801.00 511.88,794.70 513.75,792.50 515.62,789.42 517.50,777.50 520.00,787.50 521.88,776.43 523.75,771.00 525.62,774.67 527.50,772.50 529.25,767.21 531.00,764.00 533.00,770.70 535.00,772.50 536.67,773.30 538.33,781.24 540.00,784.00 541.88,788.84 543.75,800.00 546.00,820.00 548.00,837.00 550.00,854.00 551.88,858.96 553.75,857.50 555.62,846.29 557.50,837.50 560.00,830.00 561.67,832.36 563.33,825.70 565.00,827.50 567.50,845.00 569.17,846.71 570.83,839.43 572.50,840.00 575.00,855.00 576.67,865.83 578.33,876.67 580.00,887.50 581.67,899.31 583.33,902.02 585.00,912.50 586.88,916.90 588.75,920.00 590.62,915.52 592.50,912.50 594.25,904.52 596.00,892.50 598.00,873.75 600.00,855.00 601.88,850.13 603.75,854.00 605.62,857.63 607.50,857.50 609.17,853.74 610.83,858.24 612.50,854.00 614.25,857.38 616.00,865.00 617.67,864.27 619.33,856.91 621.00,856.00 622.67,860.46 624.33,857.25 626.00,862.50 628.00,875.00 630.00,887.50 631.88,907.50 633.75,927.50 635.62,941.75 637.50,956.00 639.25,938.00 641.00,920.00 642.67,916.23 644.33,908.61 646.00,905.00 647.67,905.89 649.33,901.68 651.00,901.00 652.38,868.00 653.75,835.00 655.62,817.50 657.50,800.00 659.17,801.33 660.83,793.09 662.50,795.00 664.17,792.42 665.83,783.89 667.50,781.00 669.17,786.48 670.83,782.50 672.50,786.00 674.58,786.99 676.67,782.14 678.75,784.00 680.62,784.19 682.50,777.50 685.00,762.50 687.50,777.50 689.38,774.02 691.25,775.38 693.12,768.96 695.00,769.00 696.67,771.25 698.33,763.13 700.00,764.00 701.88,768.49 703.75,765.00 705.42,765.91 707.08,772.18 708.75,772.50 710.62,761.25 712.50,750.00 715.00,767.50 716.67,767.56 718.33,778.26 720.00,777.50 721.67,772.75 723.33,774.95 725.00,771.00 726.88,774.58 728.75,781.00 731.00,802.50 733.00,822.50 735.00,842.50 736.67,855.00 738.33,867.50 740.00,880.00 741.67,895.83 743.33,911.67 745.00,927.50 746.88,943.75 748.75,960.00 750.83,960.83 752.92,961.67 755.00,962.50 756.67,962.75 758.33,963.00 760.00,963.25 761.67,963.50 763.33,963.75 765.00,964.00" fill="none" stroke="#0c1c10" stroke-width="1" shape-rendering="crispEdges"/><line x1="765" y1="965.5" x2="842" y2="965.5" stroke="#000" stroke-width="1" stroke-dasharray="4 3"/><polyline points="842.00,965.00 844.00,962.00 846.00,959.00 848.00,958.50 850.00,958.00 852.50,952.50 853.75,930.00 855.00,882.50 856.00,862.50 857.50,887.50 859.25,867.50 861.00,847.50 862.38,843.38 863.75,835.00 865.42,826.81 867.08,824.94 868.75,815.00 870.42,805.41 872.08,801.21 873.75,790.00 876.00,777.50 877.38,779.47 878.75,786.00 881.00,766.00 883.00,770.45 885.00,772.50 886.67,772.22 888.33,778.63 890.00,780.00 892.50,772.50 895.00,789.00 896.88,782.48 898.75,781.00 901.00,776.00 902.38,784.24 903.75,790.00 905.83,783.68 907.92,782.49 910.00,775.00 911.67,771.94 913.33,778.10 915.00,777.50 916.88,777.47 918.75,781.00 920.42,786.86 922.08,782.02 923.75,789.00 925.83,784.02 927.92,770.61 930.00,765.00 931.25,775.00 933.33,780.75 935.42,776.50 937.50,779.00 939.17,790.00 940.83,790.99 942.50,800.00 944.25,805.25 946.00,807.50 947.67,812.75 949.33,822.91 951.00,827.50 952.67,838.33 954.33,849.17 956.00,860.00 957.67,883.33 959.33,906.67 961.00,930.00 962.75,947.50 964.50,965.00 966.00,942.50 967.50,920.00 969.17,908.33 970.83,896.67 972.50,885.00 974.25,872.50 976.00,860.00 978.00,845.00 980.00,830.00 981.67,818.64 983.33,816.63 985.00,807.50 986.88,799.46 988.75,797.50 990.62,795.74 992.50,787.50 994.25,786.45 996.00,790.00 998.00,787.92 1000.00,780.00 1001.67,777.95 1003.33,779.54 1005.00,777.50 1007.50,766.00 1009.17,765.28 1010.83,771.38 1012.50,769.00 1014.17,763.50 1015.83,765.10 1017.50,760.00 1019.38,755.70 1021.25,760.09 1023.12,754.20 1025.00,755.00 1026.67,760.45 1028.33,754.89 1030.00,760.00 1031.88,760.60 1033.75,757.50 1035.62,757.74 1037.50,764.00 1040.00,762.50 1041.88,769.59 1043.75,771.00 1045.88,761.44 1048.00,760.00 1049.50,762.55 1051.00,758.00 1053.00,761.49 1055.00,769.00 1056.67,768.76 1058.33,758.25 1060.00,755.00 1062.00,760.96 1064.00,762.00 1066.00,754.35 1068.00,755.53 1070.00,750.00 1072.00,752.29 1074.00,760.00 1075.58,757.47 1077.17,749.33 1078.75,749.00 1080.83,758.34 1082.92,757.33 1085.00,766.00 1086.67,762.73 1088.33,749.24 1090.00,744.00 1091.88,753.43 1093.75,756.00 1095.42,748.42 1097.08,750.03 1098.75,742.50 1100.62,731.15 1102.50,725.00 1104.58,735.61 1106.67,734.03 1108.75,745.00 1111.00,724.00 1113.00,734.66 1115.00,740.00 1116.67,728.34 1118.33,724.55 1120.00,715.00 1121.67,708.54 1123.33,712.26 1125.00,706.00 1127.50,684.00 1130.00,712.50 1132.50,699.00 1134.25,698.02 1136.00,706.00 1137.67,705.88 1139.33,696.00 1141.00,694.00 1142.62,700.35 1144.25,698.66 1145.88,707.08 1147.50,710.00 1149.25,722.50 1151.00,735.00 1152.62,723.88 1154.25,719.59 1155.88,708.09 1157.50,701.00 1160.00,722.50 1162.50,702.50 1164.17,710.37 1165.83,712.14 1167.50,722.50 1169.17,725.62 1170.83,723.97 1172.50,727.50 1174.25,728.62 1176.00,725.00 1178.00,732.20 1180.00,747.50 1181.67,757.50 1183.33,767.50 1185.00,777.50 1186.88,796.25 1188.75,815.00 1191.00,830.00 1193.00,828.78 1195.00,825.00 1196.67,824.93 1198.33,832.92 1200.00,832.50 1201.67,827.24 1203.33,834.03 1205.00,829.00 1206.88,825.23 1208.75,831.47 1210.62,827.30 1212.50,830.00 1214.17,829.76 1215.83,820.91 1217.50,822.50 1219.58,821.85 1221.67,810.97 1223.75,807.50 1226.00,785.00 1227.38,772.50 1228.75,760.00 1230.62,752.87 1232.50,742.50 1234.17,734.85 1235.83,732.65 1237.50,725.00 1239.58,715.64 1241.67,714.73 1243.75,705.00 1245.62,709.33 1247.50,717.50 1249.25,714.26 1251.00,709.00 1252.38,712.53 1253.75,721.00 1255.42,719.29 1257.08,710.02 1258.75,709.00 1260.62,697.50 1262.50,686.00 1264.25,696.84 1266.00,699.00 1267.67,693.92 1269.33,698.47 1271.00,694.00 1272.67,689.51 1274.33,694.70 1276.00,690.00 1277.38,693.81 1278.75,700.00 1280.56,702.27 1282.38,692.52 1284.19,698.44 1286.00,692.50 1288.00,687.96 1290.00,691.00 1291.67,690.54 1293.33,682.94 1295.00,682.50 1296.88,686.36 1298.75,687.50 1300.42,680.95 1302.08,682.05 1303.75,677.50 1305.42,681.26 1307.08,689.23 1308.75,692.50 1311.00,687.50 1313.00,680.93 1315.00,677.50 1316.88,687.19 1318.75,692.50 1320.62,682.57 1322.50,675.00 1324.25,683.50 1326.00,690.00 1328.00,682.22 1330.00,677.50 1331.67,679.69 1333.33,676.89 1335.00,680.00 1336.88,683.09 1338.75,684.00 1340.42,681.94 1342.08,691.15 1343.75,690.00 1345.62,694.73 1347.50,702.50 1349.58,709.38 1351.67,710.28 1353.75,717.50 1355.62,730.00 1357.50,742.50 1359.17,750.61 1360.83,752.74 1362.50,760.00 1365.00,815.00 1366.67,833.67 1368.33,852.33 1370.00,871.00 1371.67,854.83 1373.33,838.67 1375.00,822.50 1377.00,810.00 1379.00,797.50 1381.00,785.00 1382.62,781.47 1384.25,765.52 1385.88,765.13 1387.50,755.00 1389.38,748.56 1391.25,748.80 1393.12,742.39 1395.00,740.00 1396.67,741.37 1398.33,736.41 1400.00,737.50 1401.88,743.53 1403.75,740.18 1405.62,744.96 1407.50,746.00 1409.17,739.34 1410.83,744.18 1412.50,739.00 1414.17,731.99 1415.83,730.90 1417.50,722.50 1419.58,728.07 1421.67,738.68 1423.75,742.50 1425.83,743.91 1427.92,758.19 1430.00,760.00 1431.88,754.06 1433.75,755.00 1435.83,764.41 1437.92,767.72 1440.00,777.50 1441.67,783.25 1443.33,782.13 1445.00,790.00 1447.00,802.86 1449.00,806.27 1451.00,820.00 1452.67,827.15 1454.33,828.22 1456.00,835.00 1458.00,847.59 1460.00,852.50 1461.88,856.80 1463.75,870.00 1466.00,854.00 1468.00,869.73 1470.00,877.50 1471.88,874.93 1473.75,880.00 1475.62,898.75 1477.50,917.50 1480.00,915.00 1482.00,907.32 1484.00,891.41 1486.00,885.00 1487.67,887.63 1489.33,883.85 1491.00,887.50 1492.67,892.24 1494.33,891.40 1496.00,895.00 1497.50,907.50 1499.00,920.00 1501.00,912.50 1502.62,918.16 1504.25,921.31 1505.88,928.64 1507.50,932.50 1509.25,926.70 1511.00,925.00 1513.00,929.61 1515.00,929.00 1516.67,920.29 1518.33,917.23 1520.00,907.50 1521.67,899.83 1523.33,901.84 1525.00,892.50 1526.88,873.75 1528.75,855.00 1531.00,875.00 1532.62,867.10 1534.25,865.52 1535.88,856.33 1537.50,852.50 1539.17,850.86 1540.83,844.12 1542.50,842.50 1544.25,844.43 1546.00,840.00 1547.62,834.60 1549.25,841.44 1550.88,833.57 1552.50,835.00 1554.25,833.29 1556.00,825.00 1557.38,813.75 1558.75,802.50 1560.00,835.00 1561.88,821.25 1563.75,807.50 1565.83,806.20 1567.92,813.80 1570.00,815.00 1572.00,808.35 1574.00,812.52 1576.00,805.00 1578.00,805.01 1580.00,812.50 1581.67,811.63 1583.33,800.83 1585.00,799.00 1586.67,801.79 1588.33,797.57 1590.00,802.50 1591.67,801.33 1593.33,792.03 1595.00,792.50 1597.00,794.07 1599.00,784.45 1601.00,784.00 1602.62,787.28 1604.25,781.44 1605.88,790.16 1607.50,787.50 1609.25,782.15 1611.00,780.00 1612.38,788.94 1613.75,795.00 1615.42,789.80 1617.08,791.83 1618.75,784.00 1620.83,781.84 1622.92,788.84 1625.00,789.00 1627.50,781.00 1630.00,796.00 1632.00,788.77 1634.00,793.76 1636.00,786.00 1637.38,777.20 1638.75,775.00 1640.83,778.06 1642.92,773.75 1645.00,777.50 1646.67,775.63 1648.33,769.78 1650.00,767.50 1652.50,780.00 1654.17,781.06 1655.83,770.06 1657.50,770.00 1659.12,773.09 1660.75,766.23 1662.38,773.27 1664.00,771.00 1666.00,769.95 1668.00,780.89 1670.00,780.00 1671.67,777.43 1673.33,780.21 1675.00,777.50 1677.50,785.00 1679.25,781.47 1681.00,782.00" fill="none" stroke="#0c1c10" stroke-width="1" shape-rendering="crispEdges"/><path d="M208.5,804.1666666666666 V847.5916666666667 L209.5,849.5916666666667 V924.7916666666666 L210.5,926.7916666666666 V966 M212.5,804.1666666666666 V847.5916666666667 L211.5,849.5916666666667 V924.7916666666666 L210.5,926.7916666666666" fill="none" stroke="#c42a30" stroke-width="1"/><rect x="210" y="849.5916666666667" width="1" height="75.19999999999993" fill="#e49090"/><path d="M446.5,830.6428571428571 V866.9192857142857 L447.5,868.9192857142857 V931.4107142857142 L448.5,933.4107142857142 V966 M450.5,830.6428571428571 V866.9192857142857 L449.5,868.9192857142857 V931.4107142857142 L448.5,933.4107142857142" fill="none" stroke="#c42a30" stroke-width="1"/><rect x="448" y="868.9192857142857" width="1" height="62.491428571428514" fill="#e49090"/><path d="M484.5,784.8333333333334 V833.4783333333334 L485.5,835.4783333333334 V919.9583333333334 L486.5,921.9583333333334 V966 M488.5,784.8333333333334 V833.4783333333334 L487.5,835.4783333333334 V919.9583333333334 L486.5,921.9583333333334" fill="none" stroke="#c42a30" stroke-width="1"/><rect x="486" y="835.4783333333334" width="1" height="84.48000000000002" fill="#e49090"/><path d="M539.5,788.2666666666667 V835.9846666666666 L540.5,837.9846666666666 V920.8166666666666 L541.5,922.8166666666666 V966 M543.5,788.2666666666667 V835.9846666666666 L542.5,837.9846666666666 V920.8166666666666 L541.5,922.8166666666666" fill="none" stroke="#c42a30" stroke-width="1"/><rect x="541" y="837.9846666666666" width="1" height="82.832" fill="#e49090"/><path d="M606.5,857.15 V886.2695 L607.5,888.2695 V938.0375 L608.5,940.0375 V966 M610.5,857.15 V886.2695 L609.5,888.2695 V938.0375 L608.5,940.0375" fill="none" stroke="#c42a30" stroke-width="1"/><rect x="608" y="888.2695" width="1" height="49.76800000000003" fill="#e49090"/><path d="M706.5,771.375 V823.65375 L707.5,825.65375 V916.59375 L708.5,918.59375 V966 M710.5,771.375 V823.65375 L709.5,825.65375 V916.59375 L708.5,918.59375" fill="none" stroke="#c42a30" stroke-width="1"/><rect x="708" y="825.65375" width="1" height="90.94000000000005" fill="#e49090"/><path d="M731.5,822.5 V860.975 L732.5,862.975 V929.375 L733.5,931.375 V966 M735.5,822.5 V860.975 L734.5,862.975 V929.375 L733.5,931.375" fill="none" stroke="#c42a30" stroke-width="1"/><rect x="733" y="862.975" width="1" height="66.39999999999998" fill="#e49090"/><path d="M1017.5,758.8333333333334 V814.4983333333333 L1018.5,816.4983333333333 V913.4583333333334 L1019.5,915.4583333333334 V966 M1021.5,758.8333333333334 V814.4983333333333 L1020.5,816.4983333333333 V913.4583333333334 L1019.5,915.4583333333334" fill="none" stroke="#c42a30" stroke-width="1"/><rect x="1019" y="816.4983333333333" width="1" height="96.96000000000004" fill="#e49090"/><path d="M1286.5,691.65625 V765.4590625 L1287.5,767.4590625 V896.6640625 L1288.5,898.6640625 V966 M1290.5,691.65625 V765.4590625 L1289.5,767.4590625 V896.6640625 L1288.5,898.6640625" fill="none" stroke="#c42a30" stroke-width="1"/><rect x="1288" y="767.4590625" width="1" height="129.20500000000004" fill="#e49090"/><rect x="1287" y="767.4590625" width="3" height="129.20500000000004" fill="#801048"/><path d="M1311.5,681.875 V758.31875 L1312.5,760.31875 V894.21875 L1313.5,896.21875 V966 M1315.5,681.875 V758.31875 L1314.5,760.31875 V894.21875 L1313.5,896.21875" fill="none" stroke="#c42a30" stroke-width="1"/><rect x="1313" y="760.31875" width="1" height="133.89999999999998" fill="#e49090"/><path d="M1339.5,687.0 V762.06 L1340.5,764.06 V895.5 L1341.5,897.5 V966 M1343.5,687.0 V762.06 L1342.5,764.06 V895.5 L1341.5,897.5" fill="none" stroke="#c42a30" stroke-width="1"/><rect x="1341" y="764.06" width="1" height="131.44000000000005" fill="#e49090"/><polyline points="148.5,838 148.5,958" fill="none" stroke="#c42a30" stroke-width="1"/><line x1="1288.5" y1="668" x2="1288.5" y2="686" stroke="#3030c0" stroke-width="1"/><line x1="1288.5" y1="686" x2="1288.5" y2="760" stroke="#6a2060" stroke-width="1"/></g></svg><div style="position:absolute;left:2px;top:982px;width:1678px;height:16px;background:#fbfbf8;"></div><div style="position:absolute;left:2px;top:983px;width:16px;height:15px;border-radius:2px;background:linear-gradient(135deg,#dce6fc,#c2d3fc 50%,#b0c6f8);border:1px solid #fff;box-sizing:border-box;box-shadow:inset 0 0 0 1px #b6c8f0;">
<svg width="14" height="13" style="position:absolute;left:0;top:0" viewBox="0 0 14 14"><path d="M9 3 L5 7 L9 11" fill="none" stroke="#4d6185" stroke-width="2"/></svg></div><div style="position:absolute;left:1661px;top:983px;width:16px;height:15px;border-radius:2px;background:linear-gradient(135deg,#dce6fc,#c2d3fc 50%,#b0c6f8);border:1px solid #fff;box-sizing:border-box;box-shadow:inset 0 0 0 1px #b6c8f0;">
<svg width="14" height="13" style="position:absolute;left:0;top:0" viewBox="0 0 14 14"><path d="M5 3 L9 7 L5 11" fill="none" stroke="#4d6185" stroke-width="2"/></svg></div><div style="position:absolute;left:19px;top:983px;width:1640px;height:15px;border-radius:2px;background:linear-gradient(to bottom,#cbdafd,#bccffc 60%,#b0c6fa);border:1px solid #fff;box-sizing:border-box;box-shadow:inset 0 0 0 1px #a9bef2;"></div><div style="position:absolute;left:835px;top:987px;width:8px;height:7px;background-image:repeating-linear-gradient(to right,#eef3ff 0 1px,#8ea8e0 1px 2px);"></div><div style="position:absolute;left:0;top:998px;width:1680px;height:20px;background:#ece9d8;"></div><div style="position:absolute;left:0;top:1017px;width:1680px;height:1px;background:#e4f4fc;"></div><div class="t11" style="left:2px;top:1004px;">Ready</div><div style="position:absolute;left:1332px;top:1002px;width:34px;height:15px;border-top:1px solid #aca899;border-left:1px solid #aca899;border-right:1px solid #fff;border-bottom:1px solid #fff;box-sizing:border-box;overflow:hidden;"><div class="t11" style="left:1px;top:1px;">.022</div></div><div style="position:absolute;left:1370px;top:1002px;width:34px;height:15px;border-top:1px solid #aca899;border-left:1px solid #aca899;border-right:1px solid #fff;border-bottom:1px solid #fff;box-sizing:border-box;overflow:hidden;"><div class="t11" style="left:1px;top:1px;">AVG</div></div><div style="position:absolute;left:1408px;top:1002px;width:54px;height:15px;border-top:1px solid #aca899;border-left:1px solid #aca899;border-right:1px solid #fff;border-bottom:1px solid #fff;box-sizing:border-box;overflow:hidden;"><div class="t11" style="left:1px;top:1px;">23.98</div></div><div style="position:absolute;left:1466px;top:1002px;width:67px;height:15px;border-top:1px solid #aca899;border-left:1px solid #aca899;border-right:1px solid #fff;border-bottom:1px solid #fff;box-sizing:border-box;overflow:hidden;"><div class="t11" style="left:1px;top:1px;">-23.14802400</div></div><div style="position:absolute;left:1536px;top:1002px;width:75px;height:15px;border-top:1px solid #aca899;border-left:1px solid #aca899;border-right:1px solid #fff;border-bottom:1px solid #fff;box-sizing:border-box;overflow:hidden;"><div class="t11" style="left:1px;top:1px;">+150.76220450</div></div><div style="position:absolute;left:1614px;top:1002px;width:56px;height:15px;border-top:1px solid #aca899;border-left:1px solid #aca899;border-right:1px solid #fff;border-bottom:1px solid #fff;box-sizing:border-box;overflow:hidden;"><div class="t11" style="left:1px;top:1px;">01:23:24</div></div><svg style="position:absolute;left:1666px;top:1004px" width="14" height="14"><g fill="#aca899"><rect x="10" y="2" width="2" height="2"/><rect x="6" y="6" width="2" height="2"/><rect x="10" y="6" width="2" height="2"/><rect x="2" y="10" width="2" height="2"/><rect x="6" y="10" width="2" height="2"/><rect x="10" y="10" width="2" height="2"/></g></svg><div style="position:absolute;left:0;top:1018px;width:1680px;height:30px;background:linear-gradient(to bottom,#3462b8 0px,#3a7ee8 1px,#4590fa 2px,#3a7aea 3.5px,#2456d6 6px,#2052d4 12px,#2058dc 18px,#2062e2 25px,#1e58d0 27px,#1848c0 30px);"></div><div style="position:absolute;left:0;top:1018px;width:96px;height:30px;border-radius:0 12px 12px 0;background:linear-gradient(to bottom,#3c8f3c 0px,#5fb85f 3px,#3c9a3c 8px,#379237 18px,#2f7f2f 26px,#256a25 30px);"></div><svg style="position:absolute;left:9px;top:1024px" width="20" height="19" viewBox="0 0 20 19">
<path d="M2 3 q4 -2 7 0 l-1.5 6 q-3 -2 -7 0z" fill="#f06a2a"/><path d="M10 3 q3 2 8 0 l-1.5 6 q-4 2 -8 0z" fill="#6cc04a"/>
<path d="M0.5 10 q4 -2 7 0 l-1.5 6 q-3 -2 -7 0z" fill="#3f8ae6"/><path d="M8.5 10 q3 2 8 0 l-1.5 6 q-4 2 -8 0z" fill="#f4c430"/></svg><div style="position:absolute;left:34px;top:1022px;font:bold italic 18px 'Liberation Sans',sans-serif;color:#fff;text-shadow:1px 1px 1px #1a4a1a;">start</div><div style="position:absolute;left:106px;top:1022px;width:159px;height:23px;border-radius:3px;background:#1e4fc0;border:1px solid #1740a8;box-sizing:border-box;box-shadow:inset 1px 1px 1px #163a98;"></div><svg style="position:absolute;left:116px;top:1025px" width="18" height="17" viewBox="0 0 16 16"><rect width="16" height="16" fill="#fff"/><rect x="0" y="0" width="3" height="16" fill="#d01818"/>
 <rect x="3" y="0" width="4" height="4" fill="#000"/><rect x="11" y="0" width="4" height="4" fill="#000"/><rect x="7" y="4" width="4" height="4" fill="#000"/><rect x="3" y="8" width="4" height="4" fill="#000"/><rect x="11" y="8" width="4" height="4" fill="#000"/><rect x="7" y="12" width="4" height="4" fill="#000"/></svg><div class="t11" style="left:137px;top:1028px;color:#fff;letter-spacing:-0.3px;">All Divisions</div><div style="position:absolute;left:1606px;top:1018px;width:74px;height:30px;background:linear-gradient(to bottom,#1a8ee8 0px,#18a0f0 3px,#0f8ae6 12px,#0d7fdc 25px,#0b6ccc 30px);border-left:1px solid #0a5ab0;box-sizing:border-box;"></div><div class="t11" style="left:1531px;top:1027px;color:#fff;">EN</div><div style="position:absolute;left:1555px;top:1025px;width:14px;height:14px;background:#fff;border:1px solid #000;box-sizing:border-box;font:bold 11px 'Liberation Sans',sans-serif;text-align:center;line-height:12px;color:#000;">?</div><svg style="position:absolute;left:1578px;top:1024px" width="14" height="18"><rect x="4.5" y="1.5" width="7" height="5" fill="none" stroke="#fff"/><rect x="1.5" y="4.5" width="7" height="5" fill="#2a6ce0" stroke="#fff"/><path d="M4 13 h6 l-3 3z" fill="#fff"/></svg><div style="position:absolute;left:1596px;top:1024px;width:19px;height:19px;border-radius:50%;background:radial-gradient(circle at 40% 35%,#8cc8ff,#3a8ee8 60%,#1a62c8);border:1px solid #d8ecff;box-sizing:border-box;"></div><svg style="position:absolute;left:1600px;top:1028px" width="12" height="12"><path d="M7 2 L3 6 L7 10" fill="none" stroke="#fff" stroke-width="2"/></svg><div class="t11" style="left:1620px;top:1027px;color:#fff;">11:11 AM</div></body></html>
